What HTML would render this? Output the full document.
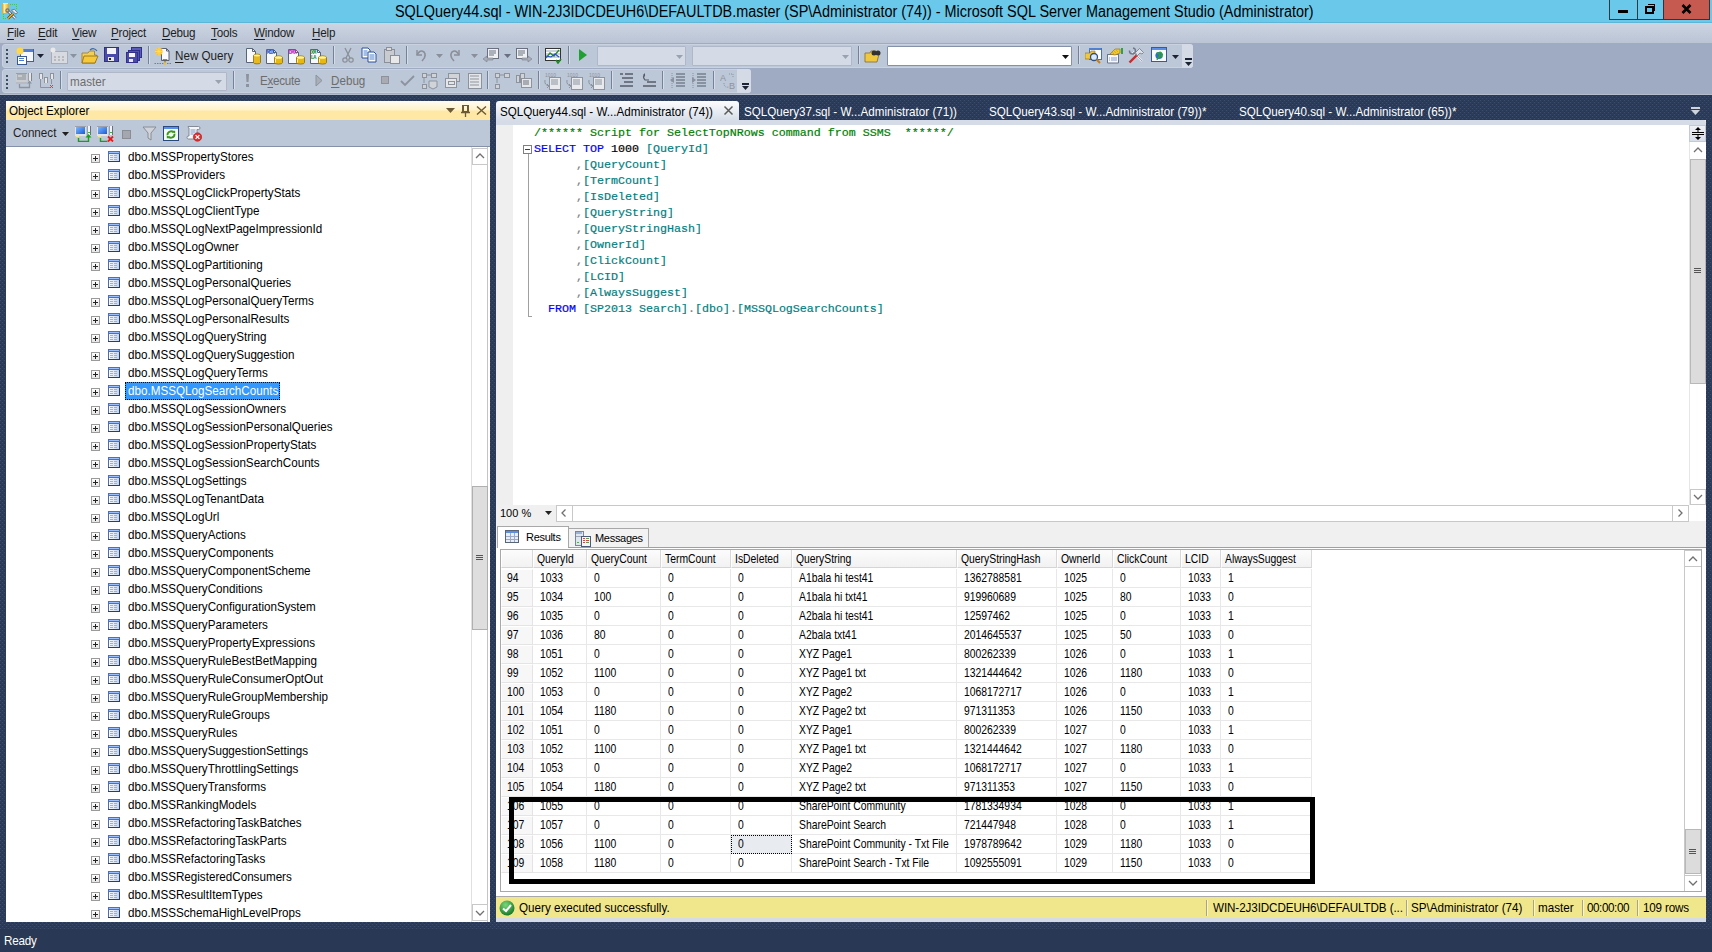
<!DOCTYPE html><html><head><meta charset="utf-8"><style>
*{margin:0;padding:0;box-sizing:border-box}
html,body{width:1712px;height:952px;overflow:hidden}
body{position:relative;background:#293955;font-family:"Liberation Sans", sans-serif;font-size:11.5px;color:#000}
.ab{position:absolute}
.tr,.su{font-size:12.6px;transform:scaleX(0.925);transform-origin:0 0}
svg rect{shape-rendering:crispEdges}
.t{position:absolute;white-space:nowrap;line-height:1}
.env{background-color:#2b3b58;background-image:conic-gradient(from 270deg at 1px 1px,#3a4d6e 90deg,transparent 0),conic-gradient(from 270deg at 1px 1px,#3a4d6e 90deg,transparent 0),conic-gradient(from 270deg at 1px 1px,#26344f 90deg,transparent 0),conic-gradient(from 270deg at 1px 1px,#26344f 90deg,transparent 0);background-size:4px 4px;background-position:0 0,2px 2px,0 3px,2px 1px}
</style></head><body>
<div class="ab env" style="left:0;top:92px;width:1712px;height:860px"></div>
<div class="ab" style="left:0;top:0;width:1712px;height:23px;background:#6ac9ea;border-bottom:1px solid #5db6d8"></div>
<svg class="ab" style="left:0;top:0" width="20" height="21" viewBox="0 0 20 21">
<defs><linearGradient id="gold" x1="0" x2="1"><stop offset="0" stop-color="#d89a20"/><stop offset="0.35" stop-color="#fff0a0"/><stop offset="1" stop-color="#e8a010"/></linearGradient></defs>
<rect x="2" y="3" width="7" height="10" rx="1.5" fill="url(#gold)"/><rect x="3" y="3" width="5" height="1" fill="#f8e8a8"/>
<g fill="#44cc33"><rect x="10" y="4" width="1" height="1"/><rect x="12" y="4" width="1" height="1"/><rect x="14" y="4" width="1" height="1"/><rect x="16" y="4" width="1" height="1"/><rect x="16" y="6" width="1" height="1"/><rect x="16" y="8" width="1" height="1"/><rect x="3" y="14" width="1" height="1"/><rect x="3" y="16" width="1" height="1"/><rect x="3" y="18" width="1" height="1"/><rect x="5" y="18" width="1" height="1"/></g>
<path d="M8 11L15.5 18.5" stroke="#4a5470" stroke-width="2.6"/><path d="M8 11L15.5 18.5" stroke="#f4f6ff" stroke-width="1.2"/><circle cx="7.5" cy="10.5" r="1.6" fill="none" stroke="#6a7490" stroke-width="1.2"/>
<path d="M8 18.5L13 13.5" stroke="#5a4010" stroke-width="2.6"/><path d="M8 18.5L13 13.5" stroke="#f0b020" stroke-width="1.4"/>
<path d="M11.5 10L14.5 9.3L17.5 12.8L16 14L13.2 12z" fill="#e8eaf0" stroke="#606a80" stroke-width="0.8"/>
</svg>
<div class="t" style="left:395px;top:4px;font-size:16px;transform:scaleX(0.9015);transform-origin:0 0;color:#000">SQLQuery44.sql - WIN-2J3IDCDEUH6\DEFAULTDB.master (SP\Administrator (74)) - Microsoft SQL Server Management Studio (Administrator)</div>
<div class="ab" style="left:1609px;top:0;width:29px;height:20px;border:1px solid #2d3b40;border-top:0"></div>
<div class="ab" style="left:1637px;top:0;width:27px;height:20px;border:1px solid #2d3b40;border-top:0;border-left:0"></div>
<div class="ab" style="left:1663px;top:0;width:47px;height:20px;background:#c75a50;border:1px solid #3a3030;border-top:0"></div>
<div class="ab" style="left:1618px;top:10px;width:10px;height:3px;background:#000"></div>
<div class="ab" style="left:1645px;top:6px;width:9px;height:8px;border:2px solid #000;border-top-width:2px"></div>
<div class="ab" style="left:1648px;top:4px;width:7px;height:7px;border-top:1px solid #000;border-right:1px solid #000"></div>
<svg class="ab" style="left:1681px;top:4px" width="11" height="10" viewBox="0 0 11 10"><path d="M1.5 1L9.5 9M9.5 1L1.5 9" stroke="#000" stroke-width="2.6"/></svg>
<div class="ab" style="left:0;top:23px;width:1712px;height:20px;background:linear-gradient(#cdd5e2,#bac4d5)"></div>
<div class="t su" style="left:7px;top:27px;letter-spacing:-0.2px;color:#1e1e1e"><u style="text-decoration-thickness:1px;text-underline-offset:2px">F</u>ile</div>
<div class="t su" style="left:38px;top:27px;letter-spacing:-0.2px;color:#1e1e1e"><u style="text-decoration-thickness:1px;text-underline-offset:2px">E</u>dit</div>
<div class="t su" style="left:72px;top:27px;letter-spacing:-0.2px;color:#1e1e1e"><u style="text-decoration-thickness:1px;text-underline-offset:2px">V</u>iew</div>
<div class="t su" style="left:111px;top:27px;letter-spacing:-0.2px;color:#1e1e1e"><u style="text-decoration-thickness:1px;text-underline-offset:2px">P</u>roject</div>
<div class="t su" style="left:162px;top:27px;letter-spacing:-0.2px;color:#1e1e1e"><u style="text-decoration-thickness:1px;text-underline-offset:2px">D</u>ebug</div>
<div class="t su" style="left:211px;top:27px;letter-spacing:-0.2px;color:#1e1e1e"><u style="text-decoration-thickness:1px;text-underline-offset:2px">T</u>ools</div>
<div class="t su" style="left:254px;top:27px;letter-spacing:-0.2px;color:#1e1e1e"><u style="text-decoration-thickness:1px;text-underline-offset:2px">W</u>indow</div>
<div class="t su" style="left:312px;top:27px;letter-spacing:-0.2px;color:#1e1e1e"><u style="text-decoration-thickness:1px;text-underline-offset:2px">H</u>elp</div>
<div class="ab" style="left:0;top:43px;width:1712px;height:52px;background:#9eabc2;border-bottom:1px solid #b3bdce"></div>
<div class="ab" style="left:2px;top:44px;width:1191px;height:24px;background:#bcc7d8;border-radius:3px;border:1px solid #c9d2e0"></div>
<div class="ab" style="left:1182px;top:44px;width:11px;height:24px;background:#d5dbe6;border-radius:0 3px 3px 0"></div>
<div class="ab" style="left:2px;top:69px;width:749px;height:24px;background:#bcc7d8;border-radius:3px;border:1px solid #c9d2e0"></div>
<div class="ab" style="left:737px;top:69px;width:14px;height:24px;background:#d5dbe6;border-radius:0 3px 3px 0"></div>
<div class="ab" style="left:6px;top:49px;width:2px;height:2px;background:#3d4b63"></div>
<div class="ab" style="left:6px;top:53px;width:2px;height:2px;background:#3d4b63"></div>
<div class="ab" style="left:6px;top:57px;width:2px;height:2px;background:#3d4b63"></div>
<div class="ab" style="left:6px;top:61px;width:2px;height:2px;background:#3d4b63"></div>
<div class="ab" style="left:6px;top:75px;width:2px;height:2px;background:#3d4b63"></div>
<div class="ab" style="left:6px;top:79px;width:2px;height:2px;background:#3d4b63"></div>
<div class="ab" style="left:6px;top:83px;width:2px;height:2px;background:#3d4b63"></div>
<div class="ab" style="left:6px;top:87px;width:2px;height:2px;background:#3d4b63"></div>
<svg class="ab" style="left:16px;top:47px" width="18" height="18" viewBox="0 0 18 18"><rect x="4" y="2" width="13" height="12" fill="#f4f7fc" stroke="#3e5f9a"/><rect x="4" y="2" width="13" height="3" fill="#4f7fd0"/><circle cx="4" cy="4" r="3.5" fill="#ffd84a"/><rect x="1" y="9" width="9" height="8" fill="#fff" stroke="#3a5a90"/><path d="M3 11.5h5M3 13.5h5" stroke="#4a7ad0"/></svg>
<svg class="ab" style="left:37px;top:54px" width="7" height="4" viewBox="0 0 7 4"><path d="M0 0H7L3.5 4z" fill="#1b2233"/></svg>
<svg class="ab" style="left:49px;top:47px" width="20" height="18" viewBox="0 0 20 18"><rect x="2" y="4" width="16" height="12" fill="#d7dbe1" stroke="#a8adb5"/><path d="M5 10h2M9 10h2M13 10h2M5 13h2M9 13h2M13 13h2" stroke="#999"/><circle cx="4" cy="3" r="2.5" fill="#e8e8e8"/></svg>
<svg class="ab" style="left:70px;top:54px" width="7" height="4" viewBox="0 0 7 4"><path d="M0 0H7L3.5 4z" fill="#8a92a0"/></svg>
<svg class="ab" style="left:81px;top:47px" width="18" height="18" viewBox="0 0 18 18"><path d="M1 6h6l1.5 -2h5v4h2L14 16H1z" fill="#f2cf58" stroke="#a07820" stroke-width="0.8"/><path d="M3 9h14l-3 7H1z" fill="#f6c93a" stroke="#8a6a18" stroke-width="0.8"/><path d="M9 3 q4 -3 7 1" stroke="#3a6aa8" fill="none" stroke-width="1.2"/></svg>
<svg class="ab" style="left:104px;top:47px" width="15" height="16" viewBox="0 0 15 16"><rect x="0.5" y="0.5" width="14" height="14" fill="#4a4aa8" stroke="#30308a"/><rect x="3" y="1" width="9" height="6" fill="#f4f4f8"/><rect x="4" y="10" width="6" height="4" fill="#e8e8f0"/><rect x="5" y="11" width="2" height="2" fill="#222"/></svg>
<svg class="ab" style="left:126px;top:47px" width="16" height="16" viewBox="0 0 16 16"><rect x="5" y="0.5" width="10.5" height="10" fill="#5a5ab8" stroke="#30308a"/><rect x="2.5" y="3" width="10.5" height="10" fill="#5252b0" stroke="#30308a"/><rect x="0.5" y="5" width="10.5" height="10.5" fill="#4a4aa8" stroke="#30308a"/><rect x="2.5" y="6" width="6" height="4" fill="#f4f4f8"/><rect x="3" y="12" width="4" height="3" fill="#e8e8f0"/></svg>
<div class="ab" style="left:148px;top:46px;width:1px;height:18px;background:#74819a;box-shadow:1px 0 #d6dde8"></div>
<svg class="ab" style="left:154px;top:47px" width="19" height="18" viewBox="0 0 19 18"><path d="M7.5 1.5h5l2.5 2.5v9.5h-7.5z" fill="#fbfbfd" stroke="#5a6070"/><path d="M12.5 1.5v2.5h2.5" fill="none" stroke="#5a6070"/><path d="M9 13.5v-1h4v1" fill="none" stroke="#6a7080" stroke-width="0.8"/><circle cx="5" cy="4.5" r="3.6" fill="#ffc020"/><path d="M5 0.5v8M1 4.5h8M2.2 1.7l5.6 5.6M7.8 1.7l-5.6 5.6" stroke="#ffe070" stroke-width="0.8"/><path d="M0.5 16.5h17" stroke="#b07810" stroke-width="1" stroke-dasharray="1.5,1"/><path d="M11 13.5v3" stroke="#806010"/><circle cx="11" cy="16.5" r="1.3" fill="#f0c030"/></svg>
<div class="t su" style="left:175px;top:50px;color:#1e1e1e"><u style="text-decoration-thickness:1px;text-underline-offset:2px">N</u>ew Query</div>
<svg class="ab" style="left:245px;top:47px" width="18" height="18" viewBox="0 0 18 18"><path d="M1.5 1.5h6l3 3v11h-9z" fill="#f8f9fc" stroke="#5a6478"/><path d="M7.5 1.5v3h3" fill="none" stroke="#5a6478"/><path d="M8.5 8.5a3.5 1.4 0 0 1 7 0v7a3.5 1.4 0 0 1 -7 0z" fill="#e8b820" stroke="#8a6a08" stroke-width="0.8"/><ellipse cx="12" cy="8.5" rx="3.1" ry="1.1" fill="#fff2a0"/></svg>
<svg class="ab" style="left:265px;top:47px" width="19" height="18" viewBox="0 0 19 18"><path d="M1.5 2.5h7l3 3v11h-10z" fill="#f8f9fc" stroke="#5a6478"/><path d="M8.5 2.5v3h3" fill="none" stroke="#5a6478"/><text x="1.8" y="7" font-size="5.2" font-family="Liberation Mono" font-weight="bold" fill="#1a50c8" letter-spacing="-0.6">MDX</text><path d="M9.5 10.5a4 1.6 0 0 1 8 0v5a4 1.6 0 0 1 -8 0z" fill="#e6b810" stroke="#8a6a08" stroke-width="0.8"/><ellipse cx="13.5" cy="10.5" rx="3.6" ry="1.3" fill="#fff2a0"/><path d="M10.5 12v3.5" stroke="#fff0a0" stroke-width="1"/></svg>
<svg class="ab" style="left:287px;top:47px" width="19" height="18" viewBox="0 0 19 18"><path d="M1.5 2.5h7l3 3v11h-10z" fill="#f8f9fc" stroke="#5a6478"/><path d="M8.5 2.5v3h3" fill="none" stroke="#5a6478"/><text x="1.8" y="7" font-size="5.2" font-family="Liberation Mono" font-weight="bold" fill="#c020c0" letter-spacing="-0.6">DMX</text><path d="M9.5 10.5a4 1.6 0 0 1 8 0v5a4 1.6 0 0 1 -8 0z" fill="#e6b810" stroke="#8a6a08" stroke-width="0.8"/><ellipse cx="13.5" cy="10.5" rx="3.6" ry="1.3" fill="#fff2a0"/><path d="M10.5 12v3.5" stroke="#fff0a0" stroke-width="1"/></svg>
<svg class="ab" style="left:309px;top:47px" width="19" height="18" viewBox="0 0 19 18"><path d="M1.5 2.5h7l3 3v11h-10z" fill="#f8f9fc" stroke="#5a6478"/><path d="M8.5 2.5v3h3" fill="none" stroke="#5a6478"/><text x="1.8" y="7" font-size="5.2" font-family="Liberation Mono" font-weight="bold" fill="#109040" letter-spacing="-0.6">XM</text><text x="1.8" y="11.5" font-size="5.2" font-family="Liberation Mono" font-weight="bold" fill="#109040" letter-spacing="-0.6">LA</text><path d="M9.5 10.5a4 1.6 0 0 1 8 0v5a4 1.6 0 0 1 -8 0z" fill="#e6b810" stroke="#8a6a08" stroke-width="0.8"/><ellipse cx="13.5" cy="10.5" rx="3.6" ry="1.3" fill="#fff2a0"/><path d="M10.5 12v3.5" stroke="#fff0a0" stroke-width="1"/></svg>
<div class="ab" style="left:333px;top:46px;width:1px;height:18px;background:#74819a;box-shadow:1px 0 #d6dde8"></div>
<svg class="ab" style="left:342px;top:47px" width="12" height="16" viewBox="0 0 12 16"><path d="M3 1L8 11M9 1L4 11" stroke="#8a8f98" stroke-width="1.3"/><circle cx="3" cy="13" r="2.2" fill="none" stroke="#8a8f98" stroke-width="1.2"/><circle cx="9" cy="13" r="2.2" fill="none" stroke="#8a8f98" stroke-width="1.2"/></svg>
<svg class="ab" style="left:361px;top:47px" width="17" height="16" viewBox="0 0 17 16"><path d="M1 1h6l2 2v8H1z" fill="#fff" stroke="#2a50a0"/><path d="M2.5 4h4M2.5 6h4M2.5 8h4" stroke="#4a80d0"/><path d="M7 5h6l2 2v8H7z" fill="#fff" stroke="#2a50a0"/><path d="M8.5 8h5M8.5 10h5M8.5 12h5" stroke="#4a80d0"/></svg>
<svg class="ab" style="left:383px;top:47px" width="17" height="17" viewBox="0 0 17 17"><rect x="1" y="2" width="10" height="13" fill="#c8cbd0" stroke="#8a8f98"/><rect x="3.5" y="0.5" width="5" height="3" fill="#dcdcdc" stroke="#8a8f98"/><rect x="7" y="8" width="9" height="8" fill="#e8e8e8" stroke="#8a8f98"/></svg>
<div class="ab" style="left:406px;top:46px;width:1px;height:18px;background:#74819a;box-shadow:1px 0 #d6dde8"></div>
<svg class="ab" style="left:414px;top:47px" width="13" height="15" viewBox="0 0 13 15"><path d="M3 3 L3 8 L8 8" stroke="#8a8f98" stroke-width="1.4" fill="none"/><path d="M3 8 Q6 2 10 5 Q13 9 8 14" stroke="#8a8f98" stroke-width="1.6" fill="none"/></svg>
<svg class="ab" style="left:436px;top:54px" width="7" height="4" viewBox="0 0 7 4"><path d="M0 0H7L3.5 4z" fill="#8a8f98"/></svg>
<svg class="ab" style="left:449px;top:47px" width="13" height="15" viewBox="0 0 13 15"><path d="M10 3 L10 8 L5 8" stroke="#8a8f98" stroke-width="1.4" fill="none"/><path d="M10 8 Q7 2 3 5 Q0 9 5 14" stroke="#8a8f98" stroke-width="1.6" fill="none"/></svg>
<svg class="ab" style="left:471px;top:54px" width="7" height="4" viewBox="0 0 7 4"><path d="M0 0H7L3.5 4z" fill="#8a8f98"/></svg>
<svg class="ab" style="left:482px;top:47px" width="18" height="16" viewBox="0 0 18 16"><rect x="5" y="1" width="11" height="10" fill="#eef0f4" stroke="#6a7080"/><path d="M7 4h7M7 6h7M7 8h5" stroke="#6a7080"/><path d="M1 12l4 -3v2h6v2H5v2z" fill="#a8aeb8" stroke="#7a808a" stroke-width="0.6"/></svg>
<svg class="ab" style="left:504px;top:54px" width="7" height="4" viewBox="0 0 7 4"><path d="M0 0H7L3.5 4z" fill="#6a7080"/></svg>
<svg class="ab" style="left:515px;top:47px" width="18" height="16" viewBox="0 0 18 16"><rect x="1" y="1" width="11" height="10" fill="#eef0f4" stroke="#6a7080"/><path d="M3 4h7M3 6h7M3 8h5" stroke="#6a7080"/><path d="M17 12l-4 -3v2H7v2h6v2z" fill="#a8aeb8" stroke="#7a808a" stroke-width="0.6"/></svg>
<div class="ab" style="left:538px;top:46px;width:1px;height:18px;background:#74819a;box-shadow:1px 0 #d6dde8"></div>
<svg class="ab" style="left:545px;top:47px" width="17" height="17" viewBox="0 0 17 17"><rect x="0.5" y="1.5" width="15" height="12" fill="#fff" stroke="#333"/><path d="M1 4h14M1 7h14M1 10h14" stroke="#9ab"/><path d="M1 11 L5 6 L9 9 L14 3" stroke="#2a8a2a" stroke-width="1.3" fill="none"/><path d="M1 9 L6 10 L10 7 L14 10" stroke="#2a4ac0" stroke-width="1.1" fill="none"/><path d="M11 13l2 3 3 -4" stroke="#1a8a1a" stroke-width="1.6" fill="none"/></svg>
<div class="ab" style="left:568px;top:46px;width:1px;height:18px;background:#74819a;box-shadow:1px 0 #d6dde8"></div>
<svg class="ab" style="left:578px;top:48px" width="10" height="14" viewBox="0 0 10 14"><path d="M1 1L9 7L1 13z" fill="#20a030"/></svg>
<div class="ab" style="left:597px;top:46px;width:89px;height:20px;background:#d5dbe6;border:1px solid #aeb8c8;border-radius:1px"></div>
<svg class="ab" style="left:676px;top:55px" width="7" height="4" viewBox="0 0 7 4"><path d="M0 0H7L3.5 4z" fill="#9aa2b0"/></svg>
<div class="ab" style="left:692px;top:46px;width:160px;height:20px;background:#d5dbe6;border:1px solid #aeb8c8;border-radius:1px"></div>
<svg class="ab" style="left:842px;top:55px" width="7" height="4" viewBox="0 0 7 4"><path d="M0 0H7L3.5 4z" fill="#9aa2b0"/></svg>
<div class="ab" style="left:858px;top:46px;width:1px;height:18px;background:#74819a;box-shadow:1px 0 #d6dde8"></div>
<svg class="ab" style="left:864px;top:48px" width="17" height="15" viewBox="0 0 17 15"><path d="M1 5h5l1 -2h5v3h3L13 14H1z" fill="#f0c840" stroke="#806010" stroke-width="0.7"/><circle cx="10" cy="5" r="2.5" fill="#333"/><circle cx="14" cy="5" r="2.5" fill="#333"/></svg>
<div class="ab" style="left:887px;top:46px;width:185px;height:20px;background:#fff;border:1px solid #8591a8;border-radius:1px"></div>
<svg class="ab" style="left:1062px;top:55px" width="7" height="4" viewBox="0 0 7 4"><path d="M0 0H7L3.5 4z" fill="#111"/></svg>
<div class="ab" style="left:1078px;top:46px;width:1px;height:18px;background:#74819a;box-shadow:1px 0 #d6dde8"></div>
<svg class="ab" style="left:1085px;top:47px" width="17" height="17" viewBox="0 0 17 17"><rect x="4" y="1" width="12" height="11" fill="#fff" stroke="#4a70b0"/><rect x="4" y="1" width="12" height="2" fill="#5080d0"/><path d="M0 6h5l1 -2h4v8H0z" fill="#f0c840" stroke="#906818" stroke-width="0.6"/><circle cx="9" cy="10" r="3.5" fill="#d8ecff" stroke="#305080" stroke-width="1.3"/><path d="M11.5 12.5L15 16" stroke="#c08020" stroke-width="2"/></svg>
<svg class="ab" style="left:1106px;top:47px" width="18" height="17" viewBox="0 0 18 17"><rect x="1" y="7" width="12" height="9" fill="#f6f8fc"/><rect x="1" y="7" width="12" height="1" fill="#6a90d8"/><path d="M1.5 7.5h11v8.5h-11z" fill="none" stroke="#6a7488"/><path d="M3 11h1M5 11h6M3 13h1M5 13h6" stroke="#8aa0c8"/><path d="M4 7 L9 2 L14 2 L14 6 L9 8 z" fill="#f0c830" stroke="#a07810" stroke-width="0.7"/><path d="M6 5l2 2M8 4l2 2M10 3l2 2" stroke="#c89818" stroke-width="0.6"/><rect x="15" y="1" width="2" height="6" fill="#30a040"/></svg>
<svg class="ab" style="left:1128px;top:47px" width="17" height="17" viewBox="0 0 17 17"><path d="M4.5 4.5L14 14" stroke="#e8ecf0" stroke-width="2.2"/><path d="M4.5 4.5L14 14" stroke="#707888" stroke-width="0.6"/><path d="M1.5 3.5a3 3 0 1 0 3.5 -2.5" fill="none" stroke="#707888" stroke-width="1.4"/><path d="M1.5 15.5L9 8" stroke="#d02828" stroke-width="2.4"/><path d="M7.5 5.5l4 -4 4 4 -1.5 1.5 -2 -1 -3 3z" fill="#e0e4ea" stroke="#707888" stroke-width="0.8"/></svg>
<svg class="ab" style="left:1151px;top:47px" width="17" height="17" viewBox="0 0 17 17"><rect x="0" y="0" width="16" height="15" fill="#3a5a90"/><rect x="1" y="1" width="14" height="2" fill="#5a90e8"/><rect x="1" y="3" width="14" height="11" fill="#f8faff"/><circle cx="8" cy="8.5" r="3.6" fill="#2a70d0"/><path d="M5.5 6.5q2 -1 3 1q1 2 -1 3q-1 1 -1.5 2.2M8.5 5q2 0.5 2.8 2.5q-1 1 -0.5 3" fill="none" stroke="#30a030" stroke-width="1.6"/></svg>
<svg class="ab" style="left:1172px;top:55px" width="7" height="4" viewBox="0 0 7 4"><path d="M0 0H7L3.5 4z" fill="#1b2233"/></svg>
<div class="ab" style="left:1185px;top:58px;width:7px;height:2px;background:#1b2233"></div>
<svg class="ab" style="left:1185px;top:62px" width="7" height="4" viewBox="0 0 7 4"><path d="M0 0H7L3.5 4z" fill="#1b2233"/></svg>
<svg class="ab" style="left:16px;top:72px" width="17" height="17" viewBox="0 0 17 17"><rect x="0" y="1" width="11" height="9" fill="#c9ccd1"/><rect x="0" y="1" width="11" height="1" fill="#9a9ea6"/><rect x="1" y="2" width="9" height="6" fill="#a9adb4"/><rect x="2" y="3" width="4" height="2" fill="#c8cbd0"/><rect x="0" y="10" width="11" height="2" fill="#b8bcc2"/><rect x="12" y="1" width="4" height="8" fill="#e4e6e9"/><rect x="12" y="1" width="1" height="8" fill="#9a9ea6"/><rect x="15" y="1" width="1" height="8" fill="#80858d"/><path d="M3.5 12v3.5h10V11" fill="none" stroke="#8d939d" stroke-width="1.3"/><path d="M11 11.5L13.5 8.5l2.5 3z" fill="#8d939d"/></svg>
<svg class="ab" style="left:38px;top:72px" width="17" height="17" viewBox="0 0 17 17"><rect x="1" y="1" width="4" height="6" fill="#e4e6e9"/><rect x="1" y="1" width="4" height="1" fill="#8d939d"/><rect x="1" y="1" width="1" height="6" fill="#8d939d"/><rect x="4" y="1" width="1" height="6" fill="#8d939d"/><rect x="6" y="5" width="4" height="6" fill="#e4e6e9"/><rect x="6" y="5" width="1" height="6" fill="#8d939d"/><rect x="9" y="5" width="1" height="6" fill="#8d939d"/><rect x="6" y="5" width="4" height="1" fill="#8d939d"/><rect x="12" y="1" width="4" height="6" fill="#e4e6e9"/><rect x="12" y="1" width="4" height="1" fill="#8d939d"/><rect x="12" y="1" width="1" height="6" fill="#8d939d"/><rect x="15" y="1" width="1" height="6" fill="#8d939d"/><path d="M2.5 7v8.5h10M13.5 7v5" stroke="#8d939d" fill="none"/><path d="M12 13l3 3M15 13l-3 3" stroke="#d04040"/></svg>
<div class="ab" style="left:60px;top:71px;width:1px;height:18px;background:#74819a;box-shadow:1px 0 #d6dde8"></div>
<div class="ab" style="left:67px;top:72px;width:160px;height:19px;background:#d5dbe6;border:1px solid #aeb8c8;border-radius:1px"></div>
<div class="t su" style="left:70px;top:76px;color:#6d6d6d">master</div>
<svg class="ab" style="left:215px;top:80px" width="7" height="4" viewBox="0 0 7 4"><path d="M0 0H7L3.5 4z" fill="#9aa2b0"/></svg>
<div class="ab" style="left:233px;top:71px;width:1px;height:18px;background:#74819a;box-shadow:1px 0 #d6dde8"></div>
<svg class="ab" style="left:244px;top:73px" width="7" height="15" viewBox="0 0 7 15"><path d="M2 1h3l-0.5 8h-2z" fill="#8d939d"/><rect x="2" y="11" width="3" height="3" fill="#8d939d"/></svg>
<div class="t su" style="left:260px;top:75px;color:#6d6d6d;letter-spacing:-0.3px">E<u style="text-decoration-thickness:1px;text-underline-offset:2px">x</u>ecute</div>
<svg class="ab" style="left:315px;top:74px" width="8" height="13" viewBox="0 0 8 13"><path d="M1 1L7 6.5L1 12z" fill="#a9afb8" stroke="#8d939d"/></svg>
<div class="t su" style="left:331px;top:75px;color:#6d6d6d"><u style="text-decoration-thickness:1px;text-underline-offset:2px">D</u>ebug</div>
<svg class="ab" style="left:381px;top:76px" width="8" height="8" viewBox="0 0 8 8"><rect x="0" y="0" width="8" height="8" fill="#8e939a"/><rect x="1" y="1" width="6" height="6" fill="#a8acb2"/></svg>
<svg class="ab" style="left:400px;top:75px" width="15" height="12" viewBox="0 0 15 12"><path d="M1 6L5 10L14 1" stroke="#8d939d" stroke-width="1.8" fill="none"/></svg>
<svg class="ab" style="left:421px;top:72px" width="17" height="18" viewBox="0 0 17 18"><rect x="1" y="1" width="4" height="4" fill="#d0d3d8" stroke="#8d939d"/><rect x="10" y="1" width="5" height="4" fill="#d0d3d8" stroke="#8d939d"/><path d="M5 3h5" stroke="#8d939d"/><path d="M3 6v5" stroke="#8d939d"/><rect x="1" y="12" width="4" height="4" fill="#d0d3d8" stroke="#8d939d"/><path d="M8 9h8v6l-4 2 -4 -2z" fill="#d0d3d8" stroke="#8d939d"/></svg>
<svg class="ab" style="left:444px;top:72px" width="17" height="18" viewBox="0 0 17 18"><rect x="4" y="1" width="11" height="8" fill="#d0d3d8" stroke="#8d939d"/><rect x="1" y="6" width="11" height="9" fill="#e4e6ea" stroke="#8d939d"/><rect x="4" y="9" width="6" height="3" fill="none" stroke="#8d939d"/></svg>
<svg class="ab" style="left:467px;top:72px" width="15" height="18" viewBox="0 0 15 18"><rect x="1" y="1" width="13" height="15" fill="#e4e6ea" stroke="#8d939d"/><path d="M3 4h9M3 7h9M3 10h9M3 13h9" stroke="#8d939d"/></svg>
<div class="ab" style="left:487px;top:71px;width:1px;height:18px;background:#74819a;box-shadow:1px 0 #d6dde8"></div>
<svg class="ab" style="left:494px;top:72px" width="17" height="18" viewBox="0 0 17 18"><rect x="1" y="1" width="4" height="4" fill="#d0d3d8" stroke="#8d939d"/><rect x="10" y="1" width="5" height="4" fill="#d0d3d8" stroke="#8d939d"/><path d="M5 3h5M3 6v5" stroke="#8d939d"/><rect x="1" y="12" width="4" height="4" fill="#d0d3d8" stroke="#8d939d"/></svg>
<svg class="ab" style="left:515px;top:72px" width="17" height="18" viewBox="0 0 17 18"><rect x="1" y="3" width="3" height="7" fill="#d0d3d8" stroke="#8d939d"/><rect x="5" y="1" width="4" height="9" fill="#d0d3d8" stroke="#8d939d"/><rect x="6" y="6" width="10" height="9" fill="#e4e6ea" stroke="#8d939d"/><rect x="8" y="8" width="6" height="5" fill="#a8acb2"/></svg>
<div class="ab" style="left:538px;top:71px;width:1px;height:18px;background:#74819a;box-shadow:1px 0 #d6dde8"></div>
<svg class="ab" style="left:544px;top:72px" width="17" height="18" viewBox="0 0 17 18"><text x="1" y="5" font-size="5" font-family="Liberation Sans" fill="#8d939d">1010</text><rect x="5" y="5" width="11" height="12" fill="#e8eaee" stroke="#8d939d"/><path d="M7 8h7M7 10h7M7 12h7" stroke="#8d939d"/><path d="M1 8q-1 5 4 6" stroke="#8d939d" fill="none"/><path d="M3 12l2 2 -2 2" stroke="#8d939d" fill="none"/></svg>
<svg class="ab" style="left:566px;top:72px" width="17" height="18" viewBox="0 0 17 18"><text x="1" y="5" font-size="5" font-family="Liberation Sans" fill="#8d939d">1010</text><rect x="5" y="5" width="11" height="12" fill="#e8eaee" stroke="#8d939d"/><path d="M7 8h7M7 10h7M7 12h7" stroke="#8d939d"/><path d="M1 8q-1 5 4 6" stroke="#8d939d" fill="none"/><path d="M3 12l2 2 -2 2" stroke="#8d939d" fill="none"/></svg>
<svg class="ab" style="left:588px;top:72px" width="17" height="18" viewBox="0 0 17 18"><text x="1" y="5" font-size="5" font-family="Liberation Sans" fill="#8d939d">1010</text><rect x="5" y="5" width="11" height="12" fill="#e8eaee" stroke="#8d939d"/><path d="M7 8h7M7 10h7M7 12h7" stroke="#8d939d"/><path d="M1 8q-1 5 4 6" stroke="#8d939d" fill="none"/><path d="M3 12l2 2 -2 2" stroke="#8d939d" fill="none"/></svg>
<div class="ab" style="left:611px;top:71px;width:1px;height:18px;background:#74819a;box-shadow:1px 0 #d6dde8"></div>
<svg class="ab" style="left:618px;top:72px" width="17" height="18" viewBox="0 0 17 18"><path d="M2 2h3M7 2h8M4 6h11M6 10h9M2 14h13" stroke="#555c68" stroke-width="1.3"/></svg>
<svg class="ab" style="left:641px;top:72px" width="17" height="18" viewBox="0 0 17 18"><path d="M4 3q-3 1 0 5h4" stroke="#555c68" stroke-width="1.2" fill="none"/><path d="M2 3l2 -2v4z" fill="#555c68"/><path d="M6 10h9M2 14h13" stroke="#555c68" stroke-width="1.3"/></svg>
<div class="ab" style="left:662px;top:71px;width:1px;height:18px;background:#74819a;box-shadow:1px 0 #d6dde8"></div>
<svg class="ab" style="left:669px;top:72px" width="17" height="18" viewBox="0 0 17 18"><path d="M7 2h9M7 5h9M7 8h9M7 11h9M7 14h9" stroke="#555c68" stroke-width="1.2"/><path d="M1 8l4 -3v6z" fill="#8a92a0"/><path d="M3 1v16" stroke="#8a92a0" stroke-dasharray="1,1"/></svg>
<svg class="ab" style="left:690px;top:72px" width="17" height="18" viewBox="0 0 17 18"><path d="M7 2h9M7 5h9M7 8h9M7 11h9M7 14h9" stroke="#555c68" stroke-width="1.2"/><path d="M6 8l-4 -3v6z" fill="#8a92a0"/><path d="M3 1v16" stroke="#8a92a0" stroke-dasharray="1,1"/></svg>
<div class="ab" style="left:713px;top:71px;width:1px;height:18px;background:#74819a;box-shadow:1px 0 #d6dde8"></div>
<svg class="ab" style="left:720px;top:72px" width="17" height="18" viewBox="0 0 17 18"><text x="0" y="9" font-size="9" font-family="Liberation Sans" fill="#8d939d">A</text><text x="9" y="17" font-size="9" font-family="Liberation Sans" fill="#8d939d">B</text><path d="M4 11q0 5 5 4M9 2l4 0v4" stroke="#8d939d" fill="none" stroke-dasharray="1,1"/></svg>
<div class="ab" style="left:742px;top:83px;width:7px;height:2px;background:#1b2233"></div>
<svg class="ab" style="left:742px;top:86px" width="7" height="4" viewBox="0 0 7 4"><path d="M0 0H7L3.5 4z" fill="#1b2233"/></svg>
<div class="ab" style="left:6px;top:101px;width:484px;height:821px;background:#fff"></div>
<div class="ab" style="left:6px;top:101px;width:484px;height:19px;background:linear-gradient(#fffcf2 0%,#fff3cc 45%,#ffe8a6 55%,#ffe8a6 100%);border-radius:2px 2px 0 0"></div>
<div class="t su" style="left:9px;top:105px;color:#000">Object Explorer</div>
<div class="ab" style="left:6px;top:120px;width:484px;height:27px;background:#bcc7d8;border-bottom:1px solid #8591a8"></div>
<div class="t su" style="left:13px;top:127px;color:#1e1e1e">Connect</div>
<svg class="ab" style="left:446px;top:108px" width="9" height="5" viewBox="0 0 9 5"><path d="M0 0H9L4.5 5z" fill="#6b5a35"/></svg>
<svg class="ab" style="left:461px;top:105px" width="9" height="12" viewBox="0 0 9 12"><rect x="2" y="0.5" width="5" height="6" fill="none" stroke="#6b5a35" stroke-width="1.2"/><path d="M0 7.5h9M4.5 7.5v4.5" stroke="#6b5a35" stroke-width="1.3"/></svg>
<svg class="ab" style="left:476px;top:106px" width="11" height="9" viewBox="0 0 11 9"><path d="M1 0.5L10 8.5M10 0.5L1 8.5" stroke="#6b5a35" stroke-width="1.4"/></svg>
<svg class="ab" style="left:62px;top:132px" width="7" height="4" viewBox="0 0 7 4"><path d="M0 0H7L3.5 4z" fill="#1e1e1e"/></svg>
<svg class="ab" style="left:75px;top:126px" width="17" height="16" viewBox="0 0 17 16"><defs><linearGradient id="scr" x1="0" y1="0" x2="1" y2="1"><stop offset="0" stop-color="#7ab8ff"/><stop offset="1" stop-color="#1a5ad8"/></linearGradient></defs><rect x="0" y="0" width="11" height="10" fill="#dfe3ea"/><rect x="0" y="0" width="11" height="1" fill="#9aa2b0"/><rect x="1" y="1" width="9" height="7" fill="url(#scr)"/><rect x="0" y="10" width="11" height="2" fill="#c4cad4"/><rect x="1" y="10" width="3" height="1" fill="#f0e890"/><rect x="12" y="0" width="4" height="9" fill="#f4f4f6"/><rect x="12" y="0" width="1" height="9" fill="#9aa0aa"/><rect x="15" y="0" width="1" height="9" fill="#6a7080"/><rect x="13" y="6" width="2" height="1" fill="#40b040"/><path d="M3.5 12v3.5h10V11" fill="none" stroke="#16a016" stroke-width="1.4"/><path d="M10.5 11.5L13.5 8l3 3.5z" fill="#16a016"/></svg>
<svg class="ab" style="left:97px;top:126px" width="17" height="16" viewBox="0 0 17 16"><defs><linearGradient id="scr2" x1="0" y1="0" x2="1" y2="1"><stop offset="0" stop-color="#7ab8ff"/><stop offset="1" stop-color="#1a5ad8"/></linearGradient></defs><rect x="0" y="0" width="11" height="10" fill="#dfe3ea"/><rect x="0" y="0" width="11" height="1" fill="#9aa2b0"/><rect x="1" y="1" width="9" height="7" fill="url(#scr2)"/><rect x="0" y="10" width="11" height="2" fill="#c4cad4"/><rect x="1" y="10" width="3" height="1" fill="#f0e890"/><rect x="12" y="0" width="4" height="9" fill="#f4f4f6"/><rect x="12" y="0" width="1" height="9" fill="#9aa0aa"/><rect x="15" y="0" width="1" height="9" fill="#6a7080"/><rect x="13" y="6" width="2" height="1" fill="#40b040"/><path d="M3.5 12v3.5h7" fill="none" stroke="#16a016" stroke-width="1.4"/><path d="M11 10.5l5 5M16 10.5l-5 5" stroke="#f01818" stroke-width="1.8"/></svg>
<svg class="ab" style="left:122px;top:130px" width="9" height="9" viewBox="0 0 9 9"><rect x="0.5" y="0.5" width="8" height="8" fill="#a4a8ae" stroke="#8a8e94"/></svg>
<svg class="ab" style="left:142px;top:126px" width="15" height="15" viewBox="0 0 15 15"><path d="M1 1h13L9 7v7l-3 -2V7z" fill="#d0d4da" stroke="#8a8e94"/></svg>
<svg class="ab" style="left:163px;top:126px" width="17" height="16" viewBox="0 0 17 16"><rect x="0" y="0" width="16" height="15" fill="#2a4880"/><rect x="1" y="1" width="14" height="2" fill="#5a90e8"/><rect x="1" y="3" width="14" height="11" fill="#f4f8ff"/><path d="M4.5 9a3.5 3.5 0 0 1 6.2 -2.4" stroke="#3a9a10" stroke-width="1.8" fill="none"/><path d="M9 4.8h3.2v3.2z" fill="#3a9a10"/><path d="M11.5 8a3.5 3.5 0 0 1 -6.2 2.4" stroke="#3a9a10" stroke-width="1.8" fill="none"/><path d="M7 12.2H3.8V9z" fill="#3a9a10"/></svg>
<svg class="ab" style="left:185px;top:125px" width="17" height="17" viewBox="0 0 17 17"><path d="M3 1.5h10.5a1.5 1.5 0 0 1 0 3H12v9.5H3.5a1.5 1.5 0 0 1 0 -3H4V3a1.5 1.5 0 0 1 -1 -1.5z" fill="#f4f6f8" stroke="#7a8290" stroke-width="0.9"/><path d="M5.5 5h5M5.5 7h5M5.5 9h3" stroke="#7a9ad0"/><circle cx="12.5" cy="12" r="4.2" fill="#e03030" stroke="#b01818" stroke-width="0.6"/><path d="M10.6 10.1l3.8 3.8M14.4 10.1l-3.8 3.8" stroke="#fff" stroke-width="1.3"/></svg>
<div class="ab" style="left:6px;top:147px;width:465px;height:775px;overflow:hidden">
<svg width="0" height="0" style="position:absolute"><defs><linearGradient id="tg" x1="0" x2="1"><stop offset="0" stop-color="#fbfdff"/><stop offset="1" stop-color="#c4d4f0"/></linearGradient><symbol id="tbl" viewBox="0 0 12 11"><rect x="0" y="0" width="12" height="11" fill="#4a6cb4"/><rect x="0" y="0" width="12" height="3" fill="#3f6fe0"/><rect x="1" y="1" width="10" height="1" fill="#9cc0ff"/><rect x="1" y="3" width="10" height="7" fill="url(#tg)"/><rect x="2" y="4" width="3" height="1" fill="#9fb0d4"/><rect x="6" y="4" width="3" height="1" fill="#9fb0d4"/><rect x="2" y="6" width="3" height="1" fill="#9fb0d4"/><rect x="6" y="6" width="3" height="1" fill="#9fb0d4"/><rect x="2" y="8" width="3" height="1" fill="#9fb0d4"/><rect x="6" y="8" width="3" height="1" fill="#9fb0d4"/><rect x="11" y="3" width="1" height="8" fill="#26406c"/><rect x="0" y="10" width="12" height="1" fill="#26406c"/></symbol></defs></svg>
<div class="ab" style="left:85px;top:7px;width:9px;height:9px;border:1px solid #9a9a9a;background:linear-gradient(#fdfdfd,#e6e6e6)"></div>
<div class="ab" style="left:87px;top:11px;width:5px;height:1px;background:#222"></div>
<div class="ab" style="left:89px;top:9px;width:1px;height:5px;background:#222"></div>
<svg class="ab" style="left:102px;top:4px" width="12" height="11"><use href="#tbl"/></svg>
<div class="t tr" style="left:121.5px;top:4px;color:#000">dbo.MSSPropertyStores</div>
<div class="ab" style="left:85px;top:25px;width:9px;height:9px;border:1px solid #9a9a9a;background:linear-gradient(#fdfdfd,#e6e6e6)"></div>
<div class="ab" style="left:87px;top:29px;width:5px;height:1px;background:#222"></div>
<div class="ab" style="left:89px;top:27px;width:1px;height:5px;background:#222"></div>
<svg class="ab" style="left:102px;top:22px" width="12" height="11"><use href="#tbl"/></svg>
<div class="t tr" style="left:121.5px;top:22px;color:#000">dbo.MSSProviders</div>
<div class="ab" style="left:85px;top:43px;width:9px;height:9px;border:1px solid #9a9a9a;background:linear-gradient(#fdfdfd,#e6e6e6)"></div>
<div class="ab" style="left:87px;top:47px;width:5px;height:1px;background:#222"></div>
<div class="ab" style="left:89px;top:45px;width:1px;height:5px;background:#222"></div>
<svg class="ab" style="left:102px;top:40px" width="12" height="11"><use href="#tbl"/></svg>
<div class="t tr" style="left:121.5px;top:40px;color:#000">dbo.MSSQLogClickPropertyStats</div>
<div class="ab" style="left:85px;top:61px;width:9px;height:9px;border:1px solid #9a9a9a;background:linear-gradient(#fdfdfd,#e6e6e6)"></div>
<div class="ab" style="left:87px;top:65px;width:5px;height:1px;background:#222"></div>
<div class="ab" style="left:89px;top:63px;width:1px;height:5px;background:#222"></div>
<svg class="ab" style="left:102px;top:58px" width="12" height="11"><use href="#tbl"/></svg>
<div class="t tr" style="left:121.5px;top:58px;color:#000">dbo.MSSQLogClientType</div>
<div class="ab" style="left:85px;top:79px;width:9px;height:9px;border:1px solid #9a9a9a;background:linear-gradient(#fdfdfd,#e6e6e6)"></div>
<div class="ab" style="left:87px;top:83px;width:5px;height:1px;background:#222"></div>
<div class="ab" style="left:89px;top:81px;width:1px;height:5px;background:#222"></div>
<svg class="ab" style="left:102px;top:76px" width="12" height="11"><use href="#tbl"/></svg>
<div class="t tr" style="left:121.5px;top:76px;color:#000">dbo.MSSQLogNextPageImpressionId</div>
<div class="ab" style="left:85px;top:97px;width:9px;height:9px;border:1px solid #9a9a9a;background:linear-gradient(#fdfdfd,#e6e6e6)"></div>
<div class="ab" style="left:87px;top:101px;width:5px;height:1px;background:#222"></div>
<div class="ab" style="left:89px;top:99px;width:1px;height:5px;background:#222"></div>
<svg class="ab" style="left:102px;top:94px" width="12" height="11"><use href="#tbl"/></svg>
<div class="t tr" style="left:121.5px;top:94px;color:#000">dbo.MSSQLogOwner</div>
<div class="ab" style="left:85px;top:115px;width:9px;height:9px;border:1px solid #9a9a9a;background:linear-gradient(#fdfdfd,#e6e6e6)"></div>
<div class="ab" style="left:87px;top:119px;width:5px;height:1px;background:#222"></div>
<div class="ab" style="left:89px;top:117px;width:1px;height:5px;background:#222"></div>
<svg class="ab" style="left:102px;top:112px" width="12" height="11"><use href="#tbl"/></svg>
<div class="t tr" style="left:121.5px;top:112px;color:#000">dbo.MSSQLogPartitioning</div>
<div class="ab" style="left:85px;top:133px;width:9px;height:9px;border:1px solid #9a9a9a;background:linear-gradient(#fdfdfd,#e6e6e6)"></div>
<div class="ab" style="left:87px;top:137px;width:5px;height:1px;background:#222"></div>
<div class="ab" style="left:89px;top:135px;width:1px;height:5px;background:#222"></div>
<svg class="ab" style="left:102px;top:130px" width="12" height="11"><use href="#tbl"/></svg>
<div class="t tr" style="left:121.5px;top:130px;color:#000">dbo.MSSQLogPersonalQueries</div>
<div class="ab" style="left:85px;top:151px;width:9px;height:9px;border:1px solid #9a9a9a;background:linear-gradient(#fdfdfd,#e6e6e6)"></div>
<div class="ab" style="left:87px;top:155px;width:5px;height:1px;background:#222"></div>
<div class="ab" style="left:89px;top:153px;width:1px;height:5px;background:#222"></div>
<svg class="ab" style="left:102px;top:148px" width="12" height="11"><use href="#tbl"/></svg>
<div class="t tr" style="left:121.5px;top:148px;color:#000">dbo.MSSQLogPersonalQueryTerms</div>
<div class="ab" style="left:85px;top:169px;width:9px;height:9px;border:1px solid #9a9a9a;background:linear-gradient(#fdfdfd,#e6e6e6)"></div>
<div class="ab" style="left:87px;top:173px;width:5px;height:1px;background:#222"></div>
<div class="ab" style="left:89px;top:171px;width:1px;height:5px;background:#222"></div>
<svg class="ab" style="left:102px;top:166px" width="12" height="11"><use href="#tbl"/></svg>
<div class="t tr" style="left:121.5px;top:166px;color:#000">dbo.MSSQLogPersonalResults</div>
<div class="ab" style="left:85px;top:187px;width:9px;height:9px;border:1px solid #9a9a9a;background:linear-gradient(#fdfdfd,#e6e6e6)"></div>
<div class="ab" style="left:87px;top:191px;width:5px;height:1px;background:#222"></div>
<div class="ab" style="left:89px;top:189px;width:1px;height:5px;background:#222"></div>
<svg class="ab" style="left:102px;top:184px" width="12" height="11"><use href="#tbl"/></svg>
<div class="t tr" style="left:121.5px;top:184px;color:#000">dbo.MSSQLogQueryString</div>
<div class="ab" style="left:85px;top:205px;width:9px;height:9px;border:1px solid #9a9a9a;background:linear-gradient(#fdfdfd,#e6e6e6)"></div>
<div class="ab" style="left:87px;top:209px;width:5px;height:1px;background:#222"></div>
<div class="ab" style="left:89px;top:207px;width:1px;height:5px;background:#222"></div>
<svg class="ab" style="left:102px;top:202px" width="12" height="11"><use href="#tbl"/></svg>
<div class="t tr" style="left:121.5px;top:202px;color:#000">dbo.MSSQLogQuerySuggestion</div>
<div class="ab" style="left:85px;top:223px;width:9px;height:9px;border:1px solid #9a9a9a;background:linear-gradient(#fdfdfd,#e6e6e6)"></div>
<div class="ab" style="left:87px;top:227px;width:5px;height:1px;background:#222"></div>
<div class="ab" style="left:89px;top:225px;width:1px;height:5px;background:#222"></div>
<svg class="ab" style="left:102px;top:220px" width="12" height="11"><use href="#tbl"/></svg>
<div class="t tr" style="left:121.5px;top:220px;color:#000">dbo.MSSQLogQueryTerms</div>
<div class="ab" style="left:85px;top:241px;width:9px;height:9px;border:1px solid #9a9a9a;background:linear-gradient(#fdfdfd,#e6e6e6)"></div>
<div class="ab" style="left:87px;top:245px;width:5px;height:1px;background:#222"></div>
<div class="ab" style="left:89px;top:243px;width:1px;height:5px;background:#222"></div>
<svg class="ab" style="left:102px;top:238px" width="12" height="11"><use href="#tbl"/></svg>
<div class="ab" style="left:119px;top:235px;width:155px;height:18px;background:#3399ff;border:1px dotted #000"></div>
<div class="t tr" style="left:121.5px;top:238px;color:#fff">dbo.MSSQLogSearchCounts</div>
<div class="ab" style="left:85px;top:259px;width:9px;height:9px;border:1px solid #9a9a9a;background:linear-gradient(#fdfdfd,#e6e6e6)"></div>
<div class="ab" style="left:87px;top:263px;width:5px;height:1px;background:#222"></div>
<div class="ab" style="left:89px;top:261px;width:1px;height:5px;background:#222"></div>
<svg class="ab" style="left:102px;top:256px" width="12" height="11"><use href="#tbl"/></svg>
<div class="t tr" style="left:121.5px;top:256px;color:#000">dbo.MSSQLogSessionOwners</div>
<div class="ab" style="left:85px;top:277px;width:9px;height:9px;border:1px solid #9a9a9a;background:linear-gradient(#fdfdfd,#e6e6e6)"></div>
<div class="ab" style="left:87px;top:281px;width:5px;height:1px;background:#222"></div>
<div class="ab" style="left:89px;top:279px;width:1px;height:5px;background:#222"></div>
<svg class="ab" style="left:102px;top:274px" width="12" height="11"><use href="#tbl"/></svg>
<div class="t tr" style="left:121.5px;top:274px;color:#000">dbo.MSSQLogSessionPersonalQueries</div>
<div class="ab" style="left:85px;top:295px;width:9px;height:9px;border:1px solid #9a9a9a;background:linear-gradient(#fdfdfd,#e6e6e6)"></div>
<div class="ab" style="left:87px;top:299px;width:5px;height:1px;background:#222"></div>
<div class="ab" style="left:89px;top:297px;width:1px;height:5px;background:#222"></div>
<svg class="ab" style="left:102px;top:292px" width="12" height="11"><use href="#tbl"/></svg>
<div class="t tr" style="left:121.5px;top:292px;color:#000">dbo.MSSQLogSessionPropertyStats</div>
<div class="ab" style="left:85px;top:313px;width:9px;height:9px;border:1px solid #9a9a9a;background:linear-gradient(#fdfdfd,#e6e6e6)"></div>
<div class="ab" style="left:87px;top:317px;width:5px;height:1px;background:#222"></div>
<div class="ab" style="left:89px;top:315px;width:1px;height:5px;background:#222"></div>
<svg class="ab" style="left:102px;top:310px" width="12" height="11"><use href="#tbl"/></svg>
<div class="t tr" style="left:121.5px;top:310px;color:#000">dbo.MSSQLogSessionSearchCounts</div>
<div class="ab" style="left:85px;top:331px;width:9px;height:9px;border:1px solid #9a9a9a;background:linear-gradient(#fdfdfd,#e6e6e6)"></div>
<div class="ab" style="left:87px;top:335px;width:5px;height:1px;background:#222"></div>
<div class="ab" style="left:89px;top:333px;width:1px;height:5px;background:#222"></div>
<svg class="ab" style="left:102px;top:328px" width="12" height="11"><use href="#tbl"/></svg>
<div class="t tr" style="left:121.5px;top:328px;color:#000">dbo.MSSQLogSettings</div>
<div class="ab" style="left:85px;top:349px;width:9px;height:9px;border:1px solid #9a9a9a;background:linear-gradient(#fdfdfd,#e6e6e6)"></div>
<div class="ab" style="left:87px;top:353px;width:5px;height:1px;background:#222"></div>
<div class="ab" style="left:89px;top:351px;width:1px;height:5px;background:#222"></div>
<svg class="ab" style="left:102px;top:346px" width="12" height="11"><use href="#tbl"/></svg>
<div class="t tr" style="left:121.5px;top:346px;color:#000">dbo.MSSQLogTenantData</div>
<div class="ab" style="left:85px;top:367px;width:9px;height:9px;border:1px solid #9a9a9a;background:linear-gradient(#fdfdfd,#e6e6e6)"></div>
<div class="ab" style="left:87px;top:371px;width:5px;height:1px;background:#222"></div>
<div class="ab" style="left:89px;top:369px;width:1px;height:5px;background:#222"></div>
<svg class="ab" style="left:102px;top:364px" width="12" height="11"><use href="#tbl"/></svg>
<div class="t tr" style="left:121.5px;top:364px;color:#000">dbo.MSSQLogUrl</div>
<div class="ab" style="left:85px;top:385px;width:9px;height:9px;border:1px solid #9a9a9a;background:linear-gradient(#fdfdfd,#e6e6e6)"></div>
<div class="ab" style="left:87px;top:389px;width:5px;height:1px;background:#222"></div>
<div class="ab" style="left:89px;top:387px;width:1px;height:5px;background:#222"></div>
<svg class="ab" style="left:102px;top:382px" width="12" height="11"><use href="#tbl"/></svg>
<div class="t tr" style="left:121.5px;top:382px;color:#000">dbo.MSSQueryActions</div>
<div class="ab" style="left:85px;top:403px;width:9px;height:9px;border:1px solid #9a9a9a;background:linear-gradient(#fdfdfd,#e6e6e6)"></div>
<div class="ab" style="left:87px;top:407px;width:5px;height:1px;background:#222"></div>
<div class="ab" style="left:89px;top:405px;width:1px;height:5px;background:#222"></div>
<svg class="ab" style="left:102px;top:400px" width="12" height="11"><use href="#tbl"/></svg>
<div class="t tr" style="left:121.5px;top:400px;color:#000">dbo.MSSQueryComponents</div>
<div class="ab" style="left:85px;top:421px;width:9px;height:9px;border:1px solid #9a9a9a;background:linear-gradient(#fdfdfd,#e6e6e6)"></div>
<div class="ab" style="left:87px;top:425px;width:5px;height:1px;background:#222"></div>
<div class="ab" style="left:89px;top:423px;width:1px;height:5px;background:#222"></div>
<svg class="ab" style="left:102px;top:418px" width="12" height="11"><use href="#tbl"/></svg>
<div class="t tr" style="left:121.5px;top:418px;color:#000">dbo.MSSQueryComponentScheme</div>
<div class="ab" style="left:85px;top:439px;width:9px;height:9px;border:1px solid #9a9a9a;background:linear-gradient(#fdfdfd,#e6e6e6)"></div>
<div class="ab" style="left:87px;top:443px;width:5px;height:1px;background:#222"></div>
<div class="ab" style="left:89px;top:441px;width:1px;height:5px;background:#222"></div>
<svg class="ab" style="left:102px;top:436px" width="12" height="11"><use href="#tbl"/></svg>
<div class="t tr" style="left:121.5px;top:436px;color:#000">dbo.MSSQueryConditions</div>
<div class="ab" style="left:85px;top:457px;width:9px;height:9px;border:1px solid #9a9a9a;background:linear-gradient(#fdfdfd,#e6e6e6)"></div>
<div class="ab" style="left:87px;top:461px;width:5px;height:1px;background:#222"></div>
<div class="ab" style="left:89px;top:459px;width:1px;height:5px;background:#222"></div>
<svg class="ab" style="left:102px;top:454px" width="12" height="11"><use href="#tbl"/></svg>
<div class="t tr" style="left:121.5px;top:454px;color:#000">dbo.MSSQueryConfigurationSystem</div>
<div class="ab" style="left:85px;top:475px;width:9px;height:9px;border:1px solid #9a9a9a;background:linear-gradient(#fdfdfd,#e6e6e6)"></div>
<div class="ab" style="left:87px;top:479px;width:5px;height:1px;background:#222"></div>
<div class="ab" style="left:89px;top:477px;width:1px;height:5px;background:#222"></div>
<svg class="ab" style="left:102px;top:472px" width="12" height="11"><use href="#tbl"/></svg>
<div class="t tr" style="left:121.5px;top:472px;color:#000">dbo.MSSQueryParameters</div>
<div class="ab" style="left:85px;top:493px;width:9px;height:9px;border:1px solid #9a9a9a;background:linear-gradient(#fdfdfd,#e6e6e6)"></div>
<div class="ab" style="left:87px;top:497px;width:5px;height:1px;background:#222"></div>
<div class="ab" style="left:89px;top:495px;width:1px;height:5px;background:#222"></div>
<svg class="ab" style="left:102px;top:490px" width="12" height="11"><use href="#tbl"/></svg>
<div class="t tr" style="left:121.5px;top:490px;color:#000">dbo.MSSQueryPropertyExpressions</div>
<div class="ab" style="left:85px;top:511px;width:9px;height:9px;border:1px solid #9a9a9a;background:linear-gradient(#fdfdfd,#e6e6e6)"></div>
<div class="ab" style="left:87px;top:515px;width:5px;height:1px;background:#222"></div>
<div class="ab" style="left:89px;top:513px;width:1px;height:5px;background:#222"></div>
<svg class="ab" style="left:102px;top:508px" width="12" height="11"><use href="#tbl"/></svg>
<div class="t tr" style="left:121.5px;top:508px;color:#000">dbo.MSSQueryRuleBestBetMapping</div>
<div class="ab" style="left:85px;top:529px;width:9px;height:9px;border:1px solid #9a9a9a;background:linear-gradient(#fdfdfd,#e6e6e6)"></div>
<div class="ab" style="left:87px;top:533px;width:5px;height:1px;background:#222"></div>
<div class="ab" style="left:89px;top:531px;width:1px;height:5px;background:#222"></div>
<svg class="ab" style="left:102px;top:526px" width="12" height="11"><use href="#tbl"/></svg>
<div class="t tr" style="left:121.5px;top:526px;color:#000">dbo.MSSQueryRuleConsumerOptOut</div>
<div class="ab" style="left:85px;top:547px;width:9px;height:9px;border:1px solid #9a9a9a;background:linear-gradient(#fdfdfd,#e6e6e6)"></div>
<div class="ab" style="left:87px;top:551px;width:5px;height:1px;background:#222"></div>
<div class="ab" style="left:89px;top:549px;width:1px;height:5px;background:#222"></div>
<svg class="ab" style="left:102px;top:544px" width="12" height="11"><use href="#tbl"/></svg>
<div class="t tr" style="left:121.5px;top:544px;color:#000">dbo.MSSQueryRuleGroupMembership</div>
<div class="ab" style="left:85px;top:565px;width:9px;height:9px;border:1px solid #9a9a9a;background:linear-gradient(#fdfdfd,#e6e6e6)"></div>
<div class="ab" style="left:87px;top:569px;width:5px;height:1px;background:#222"></div>
<div class="ab" style="left:89px;top:567px;width:1px;height:5px;background:#222"></div>
<svg class="ab" style="left:102px;top:562px" width="12" height="11"><use href="#tbl"/></svg>
<div class="t tr" style="left:121.5px;top:562px;color:#000">dbo.MSSQueryRuleGroups</div>
<div class="ab" style="left:85px;top:583px;width:9px;height:9px;border:1px solid #9a9a9a;background:linear-gradient(#fdfdfd,#e6e6e6)"></div>
<div class="ab" style="left:87px;top:587px;width:5px;height:1px;background:#222"></div>
<div class="ab" style="left:89px;top:585px;width:1px;height:5px;background:#222"></div>
<svg class="ab" style="left:102px;top:580px" width="12" height="11"><use href="#tbl"/></svg>
<div class="t tr" style="left:121.5px;top:580px;color:#000">dbo.MSSQueryRules</div>
<div class="ab" style="left:85px;top:601px;width:9px;height:9px;border:1px solid #9a9a9a;background:linear-gradient(#fdfdfd,#e6e6e6)"></div>
<div class="ab" style="left:87px;top:605px;width:5px;height:1px;background:#222"></div>
<div class="ab" style="left:89px;top:603px;width:1px;height:5px;background:#222"></div>
<svg class="ab" style="left:102px;top:598px" width="12" height="11"><use href="#tbl"/></svg>
<div class="t tr" style="left:121.5px;top:598px;color:#000">dbo.MSSQuerySuggestionSettings</div>
<div class="ab" style="left:85px;top:619px;width:9px;height:9px;border:1px solid #9a9a9a;background:linear-gradient(#fdfdfd,#e6e6e6)"></div>
<div class="ab" style="left:87px;top:623px;width:5px;height:1px;background:#222"></div>
<div class="ab" style="left:89px;top:621px;width:1px;height:5px;background:#222"></div>
<svg class="ab" style="left:102px;top:616px" width="12" height="11"><use href="#tbl"/></svg>
<div class="t tr" style="left:121.5px;top:616px;color:#000">dbo.MSSQueryThrottlingSettings</div>
<div class="ab" style="left:85px;top:637px;width:9px;height:9px;border:1px solid #9a9a9a;background:linear-gradient(#fdfdfd,#e6e6e6)"></div>
<div class="ab" style="left:87px;top:641px;width:5px;height:1px;background:#222"></div>
<div class="ab" style="left:89px;top:639px;width:1px;height:5px;background:#222"></div>
<svg class="ab" style="left:102px;top:634px" width="12" height="11"><use href="#tbl"/></svg>
<div class="t tr" style="left:121.5px;top:634px;color:#000">dbo.MSSQueryTransforms</div>
<div class="ab" style="left:85px;top:655px;width:9px;height:9px;border:1px solid #9a9a9a;background:linear-gradient(#fdfdfd,#e6e6e6)"></div>
<div class="ab" style="left:87px;top:659px;width:5px;height:1px;background:#222"></div>
<div class="ab" style="left:89px;top:657px;width:1px;height:5px;background:#222"></div>
<svg class="ab" style="left:102px;top:652px" width="12" height="11"><use href="#tbl"/></svg>
<div class="t tr" style="left:121.5px;top:652px;color:#000">dbo.MSSRankingModels</div>
<div class="ab" style="left:85px;top:673px;width:9px;height:9px;border:1px solid #9a9a9a;background:linear-gradient(#fdfdfd,#e6e6e6)"></div>
<div class="ab" style="left:87px;top:677px;width:5px;height:1px;background:#222"></div>
<div class="ab" style="left:89px;top:675px;width:1px;height:5px;background:#222"></div>
<svg class="ab" style="left:102px;top:670px" width="12" height="11"><use href="#tbl"/></svg>
<div class="t tr" style="left:121.5px;top:670px;color:#000">dbo.MSSRefactoringTaskBatches</div>
<div class="ab" style="left:85px;top:691px;width:9px;height:9px;border:1px solid #9a9a9a;background:linear-gradient(#fdfdfd,#e6e6e6)"></div>
<div class="ab" style="left:87px;top:695px;width:5px;height:1px;background:#222"></div>
<div class="ab" style="left:89px;top:693px;width:1px;height:5px;background:#222"></div>
<svg class="ab" style="left:102px;top:688px" width="12" height="11"><use href="#tbl"/></svg>
<div class="t tr" style="left:121.5px;top:688px;color:#000">dbo.MSSRefactoringTaskParts</div>
<div class="ab" style="left:85px;top:709px;width:9px;height:9px;border:1px solid #9a9a9a;background:linear-gradient(#fdfdfd,#e6e6e6)"></div>
<div class="ab" style="left:87px;top:713px;width:5px;height:1px;background:#222"></div>
<div class="ab" style="left:89px;top:711px;width:1px;height:5px;background:#222"></div>
<svg class="ab" style="left:102px;top:706px" width="12" height="11"><use href="#tbl"/></svg>
<div class="t tr" style="left:121.5px;top:706px;color:#000">dbo.MSSRefactoringTasks</div>
<div class="ab" style="left:85px;top:727px;width:9px;height:9px;border:1px solid #9a9a9a;background:linear-gradient(#fdfdfd,#e6e6e6)"></div>
<div class="ab" style="left:87px;top:731px;width:5px;height:1px;background:#222"></div>
<div class="ab" style="left:89px;top:729px;width:1px;height:5px;background:#222"></div>
<svg class="ab" style="left:102px;top:724px" width="12" height="11"><use href="#tbl"/></svg>
<div class="t tr" style="left:121.5px;top:724px;color:#000">dbo.MSSRegisteredConsumers</div>
<div class="ab" style="left:85px;top:745px;width:9px;height:9px;border:1px solid #9a9a9a;background:linear-gradient(#fdfdfd,#e6e6e6)"></div>
<div class="ab" style="left:87px;top:749px;width:5px;height:1px;background:#222"></div>
<div class="ab" style="left:89px;top:747px;width:1px;height:5px;background:#222"></div>
<svg class="ab" style="left:102px;top:742px" width="12" height="11"><use href="#tbl"/></svg>
<div class="t tr" style="left:121.5px;top:742px;color:#000">dbo.MSSResultItemTypes</div>
<div class="ab" style="left:85px;top:763px;width:9px;height:9px;border:1px solid #9a9a9a;background:linear-gradient(#fdfdfd,#e6e6e6)"></div>
<div class="ab" style="left:87px;top:767px;width:5px;height:1px;background:#222"></div>
<div class="ab" style="left:89px;top:765px;width:1px;height:5px;background:#222"></div>
<svg class="ab" style="left:102px;top:760px" width="12" height="11"><use href="#tbl"/></svg>
<div class="t tr" style="left:121.5px;top:760px;color:#000">dbo.MSSSchemaHighLevelProps</div>
</div>
<div class="ab" style="left:471px;top:147px;width:17px;height:775px;background:#fff;border-left:1px solid #e0e0e0;border-right:1px solid #c4c4c4"></div>
<div class="ab" style="left:472px;top:148px;width:16px;height:17px;border:1px solid #c8c8c8;background:#fff"></div>
<svg class="ab" style="left:474px;top:152px" width="12" height="8" viewBox="0 0 12 8"><path d="M2 6L6 2L10 6" stroke="#707070" stroke-width="1.3" fill="none"/></svg>
<div class="ab" style="left:472px;top:486px;width:16px;height:144px;border:1px solid #b0b0b0;background:#dedede"></div>
<div class="ab" style="left:472px;top:904px;width:16px;height:17px;border:1px solid #c8c8c8;background:#fff"></div>
<svg class="ab" style="left:474px;top:909px" width="12" height="8" viewBox="0 0 12 8"><path d="M2 2L6 6L10 2" stroke="#707070" stroke-width="1.3" fill="none"/></svg>
<div class="ab" style="left:476px;top:555px;width:7px;height:1px;background:#555;box-shadow:0 2px #555,0 4px #555"></div>
<div class="ab" style="left:0;top:929px;width:1712px;height:23px;background:#293955"></div>
<div class="ab" style="left:496px;top:120px;width:1210px;height:802px;background:#f0f0f0"></div>
<div class="ab" style="left:496px;top:120px;width:1210px;height:5px;background:#d5dce8;border-radius:0 3px 0 0"></div>
<div class="ab" style="left:496px;top:101px;width:243px;height:20px;background:linear-gradient(#fcfcfd,#e9edf3 50%,#d5dce8);border-radius:3px 3px 0 0"></div>
<div class="t su" style="left:500px;top:106px;color:#000">SQLQuery44.sql - W...Administrator (74))</div>
<svg class="ab" style="left:723px;top:105px" width="11" height="11" viewBox="0 0 11 11"><path d="M1.5 1.5L9.5 9.5M9.5 1.5L1.5 9.5" stroke="#5a5a5a" stroke-width="1.5"/></svg>
<div class="t su" style="left:744px;top:106px;color:#fff">SQLQuery37.sql - W...Administrator (71))</div>
<div class="t su" style="left:989px;top:106px;color:#fff">SQLQuery43.sql - W...Administrator (79))*</div>
<div class="t su" style="left:1239px;top:106px;color:#fff">SQLQuery40.sql - W...Administrator (65))*</div>
<div class="ab" style="left:1691px;top:107px;width:9px;height:2px;background:#ced4de"></div>
<svg class="ab" style="left:1691px;top:110px" width="9" height="5" viewBox="0 0 9 5"><path d="M0 0H9L4.5 5z" fill="#ced4de"/></svg>
<div class="ab" style="left:496px;top:125px;width:1193px;height:380px;background:#fff"></div>
<div class="ab" style="left:496px;top:125px;width:17px;height:380px;background:#efefef"></div>
<div class="ab" style="left:523px;top:145px;width:9px;height:9px;border:1px solid #808080;background:#fff"></div>
<div class="ab" style="left:525px;top:149px;width:5px;height:1px;background:#404040"></div>
<div class="ab" style="left:528px;top:154px;width:1px;height:163px;background:#a0a0a0"></div>
<div class="ab" style="left:528px;top:316px;width:4px;height:1px;background:#a0a0a0"></div>
<div class="t" style="left:534px;top:125px;font-family:'Liberation Mono', monospace;font-size:11.67px;line-height:16px;-webkit-text-stroke:0.2px currentColor"><span style="color:#008000">/******&nbsp;Script&nbsp;for&nbsp;SelectTopNRows&nbsp;command&nbsp;from&nbsp;SSMS&nbsp;&nbsp;******/</span></div>
<div class="t" style="left:534px;top:141px;font-family:'Liberation Mono', monospace;font-size:11.67px;line-height:16px;-webkit-text-stroke:0.2px currentColor"><span style="color:#0000ff">SELECT</span><span style="color:#000">&nbsp;</span><span style="color:#0000ff">TOP</span><span style="color:#000">&nbsp;1000&nbsp;</span><span style="color:#008080">[QueryId]</span></div>
<div class="t" style="left:534px;top:157px;font-family:'Liberation Mono', monospace;font-size:11.67px;line-height:16px;-webkit-text-stroke:0.2px currentColor"><span style="color:#000">&nbsp;&nbsp;&nbsp;&nbsp;&nbsp;&nbsp;</span><span style="color:#808080">,</span><span style="color:#008080">[QueryCount]</span></div>
<div class="t" style="left:534px;top:173px;font-family:'Liberation Mono', monospace;font-size:11.67px;line-height:16px;-webkit-text-stroke:0.2px currentColor"><span style="color:#000">&nbsp;&nbsp;&nbsp;&nbsp;&nbsp;&nbsp;</span><span style="color:#808080">,</span><span style="color:#008080">[TermCount]</span></div>
<div class="t" style="left:534px;top:189px;font-family:'Liberation Mono', monospace;font-size:11.67px;line-height:16px;-webkit-text-stroke:0.2px currentColor"><span style="color:#000">&nbsp;&nbsp;&nbsp;&nbsp;&nbsp;&nbsp;</span><span style="color:#808080">,</span><span style="color:#008080">[IsDeleted]</span></div>
<div class="t" style="left:534px;top:205px;font-family:'Liberation Mono', monospace;font-size:11.67px;line-height:16px;-webkit-text-stroke:0.2px currentColor"><span style="color:#000">&nbsp;&nbsp;&nbsp;&nbsp;&nbsp;&nbsp;</span><span style="color:#808080">,</span><span style="color:#008080">[QueryString]</span></div>
<div class="t" style="left:534px;top:221px;font-family:'Liberation Mono', monospace;font-size:11.67px;line-height:16px;-webkit-text-stroke:0.2px currentColor"><span style="color:#000">&nbsp;&nbsp;&nbsp;&nbsp;&nbsp;&nbsp;</span><span style="color:#808080">,</span><span style="color:#008080">[QueryStringHash]</span></div>
<div class="t" style="left:534px;top:237px;font-family:'Liberation Mono', monospace;font-size:11.67px;line-height:16px;-webkit-text-stroke:0.2px currentColor"><span style="color:#000">&nbsp;&nbsp;&nbsp;&nbsp;&nbsp;&nbsp;</span><span style="color:#808080">,</span><span style="color:#008080">[OwnerId]</span></div>
<div class="t" style="left:534px;top:253px;font-family:'Liberation Mono', monospace;font-size:11.67px;line-height:16px;-webkit-text-stroke:0.2px currentColor"><span style="color:#000">&nbsp;&nbsp;&nbsp;&nbsp;&nbsp;&nbsp;</span><span style="color:#808080">,</span><span style="color:#008080">[ClickCount]</span></div>
<div class="t" style="left:534px;top:269px;font-family:'Liberation Mono', monospace;font-size:11.67px;line-height:16px;-webkit-text-stroke:0.2px currentColor"><span style="color:#000">&nbsp;&nbsp;&nbsp;&nbsp;&nbsp;&nbsp;</span><span style="color:#808080">,</span><span style="color:#008080">[LCID]</span></div>
<div class="t" style="left:534px;top:285px;font-family:'Liberation Mono', monospace;font-size:11.67px;line-height:16px;-webkit-text-stroke:0.2px currentColor"><span style="color:#000">&nbsp;&nbsp;&nbsp;&nbsp;&nbsp;&nbsp;</span><span style="color:#808080">,</span><span style="color:#008080">[AlwaysSuggest]</span></div>
<div class="t" style="left:534px;top:301px;font-family:'Liberation Mono', monospace;font-size:11.67px;line-height:16px;-webkit-text-stroke:0.2px currentColor"><span style="color:#000">&nbsp;&nbsp;</span><span style="color:#0000ff">FROM</span><span style="color:#000">&nbsp;</span><span style="color:#008080">[SP2013&nbsp;Search]</span><span style="color:#808080">.</span><span style="color:#008080">[dbo]</span><span style="color:#808080">.</span><span style="color:#008080">[MSSQLogSearchCounts]</span></div>
<div class="ab" style="left:1689px;top:125px;width:17px;height:380px;background:#fff;border-left:1px solid #e6e6e6"></div>
<div class="ab" style="left:1689px;top:125px;width:17px;height:17px;background:linear-gradient(#eef1f6,#d8dee8);border:1px solid #c3cad6"></div>
<svg class="ab" style="left:1691px;top:126px" width="14" height="15" viewBox="0 0 14 15"><path d="M1 6.5H13M1 8.5H13" stroke="#000" stroke-width="1"/><path d="M7 1L4 4H10z M7 14L4 11H10z" fill="#000"/><path d="M7 3V6M7 9V12" stroke="#000"/></svg>
<div class="ab" style="left:1690px;top:142px;width:16px;height:17px;background:#fff"></div>
<svg class="ab" style="left:1692px;top:146px" width="12" height="8" viewBox="0 0 12 8"><path d="M2 6L6 2L10 6" stroke="#707070" stroke-width="1.3" fill="none"/></svg>
<div class="ab" style="left:1690px;top:159px;width:16px;height:225px;background:#dcdcdc;border:1px solid #b8b8b8"></div>
<div class="ab" style="left:1694px;top:268px;width:7px;height:1px;background:#555;box-shadow:0 2px #555,0 4px #555"></div>
<div class="ab" style="left:1690px;top:489px;width:16px;height:16px;background:#fff;border:1px solid #c8c8c8"></div>
<svg class="ab" style="left:1692px;top:493px" width="12" height="8" viewBox="0 0 12 8"><path d="M2 2L6 6L10 2" stroke="#707070" stroke-width="1.3" fill="none"/></svg>
<div class="ab" style="left:496px;top:505px;width:1210px;height:16px;background:#f0f0f0"></div>
<div class="t" style="left:500px;top:508px;font-size:11px;color:#000">100 %</div>
<svg class="ab" style="left:545px;top:511px" width="7" height="4" viewBox="0 0 7 4"><path d="M0 0H7L3.5 4z" fill="#222"/></svg>
<div class="ab" style="left:556px;top:505px;width:1133px;height:17px;background:#fff;border:1px solid #c8c8c8"></div>
<div class="ab" style="left:556px;top:505px;width:17px;height:17px;border:1px solid #c8c8c8;background:#fff"></div>
<svg class="ab" style="left:559px;top:508px" width="10" height="10" viewBox="0 0 10 10"><path d="M6.5 1.5L3 5L6.5 8.5" stroke="#707070" stroke-width="1.3" fill="none"/></svg>
<div class="ab" style="left:1672px;top:505px;width:17px;height:17px;border:1px solid #c8c8c8;background:#fff"></div>
<svg class="ab" style="left:1675px;top:508px" width="10" height="10" viewBox="0 0 10 10"><path d="M3.5 1.5L7 5L3.5 8.5" stroke="#707070" stroke-width="1.3" fill="none"/></svg>
<div class="ab" style="left:1689px;top:505px;width:17px;height:16px;background:#fff"></div>
<div class="ab" style="left:497px;top:526px;width:72px;height:22px;background:#fff;border:1px solid #a8a8a8;border-bottom:0"></div>
<div class="t" style="left:526px;top:532px;font-size:11px;letter-spacing:-0.3px">Results</div>
<div class="ab" style="left:568px;top:528px;width:81px;height:20px;background:#f3f3f3;border:1px solid #a8a8a8;border-bottom:0"></div>
<div class="t" style="left:595px;top:533px;font-size:11px;letter-spacing:-0.3px">Messages</div>
<svg class="ab" style="left:505px;top:530px" width="14" height="13" viewBox="0 0 14 13"><rect x="0" y="0" width="14" height="13" fill="#5a6478"/><rect x="1" y="1" width="12" height="2" fill="#5d8ee0"/><rect x="1" y="3" width="12" height="9" fill="#e8eef8"/><rect x="5" y="3" width="1" height="9" fill="#9aaac8"/><rect x="9" y="3" width="1" height="9" fill="#9aaac8"/><rect x="1" y="6" width="12" height="1" fill="#9aaac8"/><rect x="1" y="9" width="12" height="1" fill="#9aaac8"/></svg>
<svg class="ab" style="left:574px;top:530px" width="18" height="17" viewBox="0 0 18 17"><rect x="1" y="1" width="8" height="14" fill="#dfe6ee" stroke="#7a8698"/><rect x="2" y="2" width="6" height="2" fill="#9ab4d8"/><rect x="2" y="6" width="6" height="1" fill="#9aa8b8"/><rect x="7" y="6" width="9" height="10" fill="#f4f6f8" stroke="#4a5a78"/><rect x="9" y="8" width="2" height="1" fill="#e04040"/><rect x="12" y="8" width="3" height="1" fill="#50a050"/><rect x="9" y="10" width="2" height="1" fill="#e04040"/><rect x="12" y="10" width="3" height="1" fill="#e04040"/><rect x="9" y="12" width="2" height="1" fill="#e04040"/><rect x="12" y="12" width="3" height="1" fill="#50a050"/><rect x="3" y="12" width="2" height="1" fill="#50b050"/></svg>
<div class="ab" style="left:496px;top:548px;width:1210px;height:348px;background:#fff"></div>
<div class="ab" style="left:568px;top:547px;width:1138px;height:1px;background:#a0a0a0"></div>
<div class="ab" style="left:500px;top:549px;width:1202px;height:343px;background:#fff;border:1px solid #a8a8a8"></div>
<div class="ab" style="left:501px;top:550px;width:811px;height:18px;background:linear-gradient(#fcfcfc,#f1f1f1)"></div>
<div class="ab" style="left:501px;top:550px;width:32px;height:18px;border-left:1px solid #fff;border-right:1px solid #d8d8d8;border-bottom:1px solid #d5d5d5"></div>
<div class="ab" style="left:533px;top:550px;width:54px;height:18px;border-left:1px solid #fff;border-right:1px solid #d8d8d8;border-bottom:1px solid #d5d5d5"></div>
<div class="t" style="left:537px;top:553px;font-size:12.4px;transform:scaleX(0.837);transform-origin:0 0">QueryId</div>
<div class="ab" style="left:587px;top:550px;width:74px;height:18px;border-left:1px solid #fff;border-right:1px solid #d8d8d8;border-bottom:1px solid #d5d5d5"></div>
<div class="t" style="left:591px;top:553px;font-size:12.4px;transform:scaleX(0.837);transform-origin:0 0">QueryCount</div>
<div class="ab" style="left:661px;top:550px;width:70px;height:18px;border-left:1px solid #fff;border-right:1px solid #d8d8d8;border-bottom:1px solid #d5d5d5"></div>
<div class="t" style="left:665px;top:553px;font-size:12.4px;transform:scaleX(0.837);transform-origin:0 0">TermCount</div>
<div class="ab" style="left:731px;top:550px;width:61px;height:18px;border-left:1px solid #fff;border-right:1px solid #d8d8d8;border-bottom:1px solid #d5d5d5"></div>
<div class="t" style="left:735px;top:553px;font-size:12.4px;transform:scaleX(0.837);transform-origin:0 0">IsDeleted</div>
<div class="ab" style="left:792px;top:550px;width:165px;height:18px;border-left:1px solid #fff;border-right:1px solid #d8d8d8;border-bottom:1px solid #d5d5d5"></div>
<div class="t" style="left:796px;top:553px;font-size:12.4px;transform:scaleX(0.837);transform-origin:0 0">QueryString</div>
<div class="ab" style="left:957px;top:550px;width:100px;height:18px;border-left:1px solid #fff;border-right:1px solid #d8d8d8;border-bottom:1px solid #d5d5d5"></div>
<div class="t" style="left:961px;top:553px;font-size:12.4px;transform:scaleX(0.837);transform-origin:0 0">QueryStringHash</div>
<div class="ab" style="left:1057px;top:550px;width:56px;height:18px;border-left:1px solid #fff;border-right:1px solid #d8d8d8;border-bottom:1px solid #d5d5d5"></div>
<div class="t" style="left:1061px;top:553px;font-size:12.4px;transform:scaleX(0.837);transform-origin:0 0">OwnerId</div>
<div class="ab" style="left:1113px;top:550px;width:68px;height:18px;border-left:1px solid #fff;border-right:1px solid #d8d8d8;border-bottom:1px solid #d5d5d5"></div>
<div class="t" style="left:1117px;top:553px;font-size:12.4px;transform:scaleX(0.837);transform-origin:0 0">ClickCount</div>
<div class="ab" style="left:1181px;top:550px;width:40px;height:18px;border-left:1px solid #fff;border-right:1px solid #d8d8d8;border-bottom:1px solid #d5d5d5"></div>
<div class="t" style="left:1185px;top:553px;font-size:12.4px;transform:scaleX(0.837);transform-origin:0 0">LCID</div>
<div class="ab" style="left:1221px;top:550px;width:91px;height:18px;border-left:1px solid #fff;border-right:1px solid #d8d8d8;border-bottom:1px solid #d5d5d5"></div>
<div class="t" style="left:1225px;top:553px;font-size:12.4px;transform:scaleX(0.837);transform-origin:0 0">AlwaysSuggest</div>
<div class="ab" style="left:501px;top:569px;width:32px;height:19px;background:#f7f7f7;border:1px solid #e4e4e4;border-left-color:#fff;border-top-color:#fff"></div>
<div class="t" style="left:507px;top:572px;font-size:12.4px;transform:scaleX(0.837);transform-origin:0 0">94</div>
<div class="ab" style="left:533px;top:569px;width:54px;height:19px;border-right:1px solid #e8e8e8;border-bottom:1px solid #e8e8e8"></div>
<div class="t" style="left:540px;top:572px;font-size:12.4px;transform:scaleX(0.837);transform-origin:0 0">1033</div>
<div class="ab" style="left:587px;top:569px;width:74px;height:19px;border-right:1px solid #e8e8e8;border-bottom:1px solid #e8e8e8"></div>
<div class="t" style="left:594px;top:572px;font-size:12.4px;transform:scaleX(0.837);transform-origin:0 0">0</div>
<div class="ab" style="left:661px;top:569px;width:70px;height:19px;border-right:1px solid #e8e8e8;border-bottom:1px solid #e8e8e8"></div>
<div class="t" style="left:668px;top:572px;font-size:12.4px;transform:scaleX(0.837);transform-origin:0 0">0</div>
<div class="ab" style="left:731px;top:569px;width:61px;height:19px;border-right:1px solid #e8e8e8;border-bottom:1px solid #e8e8e8"></div>
<div class="t" style="left:738px;top:572px;font-size:12.4px;transform:scaleX(0.837);transform-origin:0 0">0</div>
<div class="ab" style="left:792px;top:569px;width:165px;height:19px;border-right:1px solid #e8e8e8;border-bottom:1px solid #e8e8e8"></div>
<div class="t" style="left:799px;top:572px;font-size:12.4px;transform:scaleX(0.837);transform-origin:0 0">A1bala hi test41</div>
<div class="ab" style="left:957px;top:569px;width:100px;height:19px;border-right:1px solid #e8e8e8;border-bottom:1px solid #e8e8e8"></div>
<div class="t" style="left:964px;top:572px;font-size:12.4px;transform:scaleX(0.837);transform-origin:0 0">1362788581</div>
<div class="ab" style="left:1057px;top:569px;width:56px;height:19px;border-right:1px solid #e8e8e8;border-bottom:1px solid #e8e8e8"></div>
<div class="t" style="left:1064px;top:572px;font-size:12.4px;transform:scaleX(0.837);transform-origin:0 0">1025</div>
<div class="ab" style="left:1113px;top:569px;width:68px;height:19px;border-right:1px solid #e8e8e8;border-bottom:1px solid #e8e8e8"></div>
<div class="t" style="left:1120px;top:572px;font-size:12.4px;transform:scaleX(0.837);transform-origin:0 0">0</div>
<div class="ab" style="left:1181px;top:569px;width:40px;height:19px;border-right:1px solid #e8e8e8;border-bottom:1px solid #e8e8e8"></div>
<div class="t" style="left:1188px;top:572px;font-size:12.4px;transform:scaleX(0.837);transform-origin:0 0">1033</div>
<div class="ab" style="left:1221px;top:569px;width:91px;height:19px;border-right:1px solid #e8e8e8;border-bottom:1px solid #e8e8e8"></div>
<div class="t" style="left:1228px;top:572px;font-size:12.4px;transform:scaleX(0.837);transform-origin:0 0">1</div>
<div class="ab" style="left:501px;top:588px;width:32px;height:19px;background:#f7f7f7;border:1px solid #e4e4e4;border-left-color:#fff;border-top-color:#fff"></div>
<div class="t" style="left:507px;top:591px;font-size:12.4px;transform:scaleX(0.837);transform-origin:0 0">95</div>
<div class="ab" style="left:533px;top:588px;width:54px;height:19px;border-right:1px solid #e8e8e8;border-bottom:1px solid #e8e8e8"></div>
<div class="t" style="left:540px;top:591px;font-size:12.4px;transform:scaleX(0.837);transform-origin:0 0">1034</div>
<div class="ab" style="left:587px;top:588px;width:74px;height:19px;border-right:1px solid #e8e8e8;border-bottom:1px solid #e8e8e8"></div>
<div class="t" style="left:594px;top:591px;font-size:12.4px;transform:scaleX(0.837);transform-origin:0 0">100</div>
<div class="ab" style="left:661px;top:588px;width:70px;height:19px;border-right:1px solid #e8e8e8;border-bottom:1px solid #e8e8e8"></div>
<div class="t" style="left:668px;top:591px;font-size:12.4px;transform:scaleX(0.837);transform-origin:0 0">0</div>
<div class="ab" style="left:731px;top:588px;width:61px;height:19px;border-right:1px solid #e8e8e8;border-bottom:1px solid #e8e8e8"></div>
<div class="t" style="left:738px;top:591px;font-size:12.4px;transform:scaleX(0.837);transform-origin:0 0">0</div>
<div class="ab" style="left:792px;top:588px;width:165px;height:19px;border-right:1px solid #e8e8e8;border-bottom:1px solid #e8e8e8"></div>
<div class="t" style="left:799px;top:591px;font-size:12.4px;transform:scaleX(0.837);transform-origin:0 0">A1bala hi txt41</div>
<div class="ab" style="left:957px;top:588px;width:100px;height:19px;border-right:1px solid #e8e8e8;border-bottom:1px solid #e8e8e8"></div>
<div class="t" style="left:964px;top:591px;font-size:12.4px;transform:scaleX(0.837);transform-origin:0 0">919960689</div>
<div class="ab" style="left:1057px;top:588px;width:56px;height:19px;border-right:1px solid #e8e8e8;border-bottom:1px solid #e8e8e8"></div>
<div class="t" style="left:1064px;top:591px;font-size:12.4px;transform:scaleX(0.837);transform-origin:0 0">1025</div>
<div class="ab" style="left:1113px;top:588px;width:68px;height:19px;border-right:1px solid #e8e8e8;border-bottom:1px solid #e8e8e8"></div>
<div class="t" style="left:1120px;top:591px;font-size:12.4px;transform:scaleX(0.837);transform-origin:0 0">80</div>
<div class="ab" style="left:1181px;top:588px;width:40px;height:19px;border-right:1px solid #e8e8e8;border-bottom:1px solid #e8e8e8"></div>
<div class="t" style="left:1188px;top:591px;font-size:12.4px;transform:scaleX(0.837);transform-origin:0 0">1033</div>
<div class="ab" style="left:1221px;top:588px;width:91px;height:19px;border-right:1px solid #e8e8e8;border-bottom:1px solid #e8e8e8"></div>
<div class="t" style="left:1228px;top:591px;font-size:12.4px;transform:scaleX(0.837);transform-origin:0 0">0</div>
<div class="ab" style="left:501px;top:607px;width:32px;height:19px;background:#f7f7f7;border:1px solid #e4e4e4;border-left-color:#fff;border-top-color:#fff"></div>
<div class="t" style="left:507px;top:610px;font-size:12.4px;transform:scaleX(0.837);transform-origin:0 0">96</div>
<div class="ab" style="left:533px;top:607px;width:54px;height:19px;border-right:1px solid #e8e8e8;border-bottom:1px solid #e8e8e8"></div>
<div class="t" style="left:540px;top:610px;font-size:12.4px;transform:scaleX(0.837);transform-origin:0 0">1035</div>
<div class="ab" style="left:587px;top:607px;width:74px;height:19px;border-right:1px solid #e8e8e8;border-bottom:1px solid #e8e8e8"></div>
<div class="t" style="left:594px;top:610px;font-size:12.4px;transform:scaleX(0.837);transform-origin:0 0">0</div>
<div class="ab" style="left:661px;top:607px;width:70px;height:19px;border-right:1px solid #e8e8e8;border-bottom:1px solid #e8e8e8"></div>
<div class="t" style="left:668px;top:610px;font-size:12.4px;transform:scaleX(0.837);transform-origin:0 0">0</div>
<div class="ab" style="left:731px;top:607px;width:61px;height:19px;border-right:1px solid #e8e8e8;border-bottom:1px solid #e8e8e8"></div>
<div class="t" style="left:738px;top:610px;font-size:12.4px;transform:scaleX(0.837);transform-origin:0 0">0</div>
<div class="ab" style="left:792px;top:607px;width:165px;height:19px;border-right:1px solid #e8e8e8;border-bottom:1px solid #e8e8e8"></div>
<div class="t" style="left:799px;top:610px;font-size:12.4px;transform:scaleX(0.837);transform-origin:0 0">A2bala hi test41</div>
<div class="ab" style="left:957px;top:607px;width:100px;height:19px;border-right:1px solid #e8e8e8;border-bottom:1px solid #e8e8e8"></div>
<div class="t" style="left:964px;top:610px;font-size:12.4px;transform:scaleX(0.837);transform-origin:0 0">12597462</div>
<div class="ab" style="left:1057px;top:607px;width:56px;height:19px;border-right:1px solid #e8e8e8;border-bottom:1px solid #e8e8e8"></div>
<div class="t" style="left:1064px;top:610px;font-size:12.4px;transform:scaleX(0.837);transform-origin:0 0">1025</div>
<div class="ab" style="left:1113px;top:607px;width:68px;height:19px;border-right:1px solid #e8e8e8;border-bottom:1px solid #e8e8e8"></div>
<div class="t" style="left:1120px;top:610px;font-size:12.4px;transform:scaleX(0.837);transform-origin:0 0">0</div>
<div class="ab" style="left:1181px;top:607px;width:40px;height:19px;border-right:1px solid #e8e8e8;border-bottom:1px solid #e8e8e8"></div>
<div class="t" style="left:1188px;top:610px;font-size:12.4px;transform:scaleX(0.837);transform-origin:0 0">1033</div>
<div class="ab" style="left:1221px;top:607px;width:91px;height:19px;border-right:1px solid #e8e8e8;border-bottom:1px solid #e8e8e8"></div>
<div class="t" style="left:1228px;top:610px;font-size:12.4px;transform:scaleX(0.837);transform-origin:0 0">1</div>
<div class="ab" style="left:501px;top:626px;width:32px;height:19px;background:#f7f7f7;border:1px solid #e4e4e4;border-left-color:#fff;border-top-color:#fff"></div>
<div class="t" style="left:507px;top:629px;font-size:12.4px;transform:scaleX(0.837);transform-origin:0 0">97</div>
<div class="ab" style="left:533px;top:626px;width:54px;height:19px;border-right:1px solid #e8e8e8;border-bottom:1px solid #e8e8e8"></div>
<div class="t" style="left:540px;top:629px;font-size:12.4px;transform:scaleX(0.837);transform-origin:0 0">1036</div>
<div class="ab" style="left:587px;top:626px;width:74px;height:19px;border-right:1px solid #e8e8e8;border-bottom:1px solid #e8e8e8"></div>
<div class="t" style="left:594px;top:629px;font-size:12.4px;transform:scaleX(0.837);transform-origin:0 0">80</div>
<div class="ab" style="left:661px;top:626px;width:70px;height:19px;border-right:1px solid #e8e8e8;border-bottom:1px solid #e8e8e8"></div>
<div class="t" style="left:668px;top:629px;font-size:12.4px;transform:scaleX(0.837);transform-origin:0 0">0</div>
<div class="ab" style="left:731px;top:626px;width:61px;height:19px;border-right:1px solid #e8e8e8;border-bottom:1px solid #e8e8e8"></div>
<div class="t" style="left:738px;top:629px;font-size:12.4px;transform:scaleX(0.837);transform-origin:0 0">0</div>
<div class="ab" style="left:792px;top:626px;width:165px;height:19px;border-right:1px solid #e8e8e8;border-bottom:1px solid #e8e8e8"></div>
<div class="t" style="left:799px;top:629px;font-size:12.4px;transform:scaleX(0.837);transform-origin:0 0">A2bala txt41</div>
<div class="ab" style="left:957px;top:626px;width:100px;height:19px;border-right:1px solid #e8e8e8;border-bottom:1px solid #e8e8e8"></div>
<div class="t" style="left:964px;top:629px;font-size:12.4px;transform:scaleX(0.837);transform-origin:0 0">2014645537</div>
<div class="ab" style="left:1057px;top:626px;width:56px;height:19px;border-right:1px solid #e8e8e8;border-bottom:1px solid #e8e8e8"></div>
<div class="t" style="left:1064px;top:629px;font-size:12.4px;transform:scaleX(0.837);transform-origin:0 0">1025</div>
<div class="ab" style="left:1113px;top:626px;width:68px;height:19px;border-right:1px solid #e8e8e8;border-bottom:1px solid #e8e8e8"></div>
<div class="t" style="left:1120px;top:629px;font-size:12.4px;transform:scaleX(0.837);transform-origin:0 0">50</div>
<div class="ab" style="left:1181px;top:626px;width:40px;height:19px;border-right:1px solid #e8e8e8;border-bottom:1px solid #e8e8e8"></div>
<div class="t" style="left:1188px;top:629px;font-size:12.4px;transform:scaleX(0.837);transform-origin:0 0">1033</div>
<div class="ab" style="left:1221px;top:626px;width:91px;height:19px;border-right:1px solid #e8e8e8;border-bottom:1px solid #e8e8e8"></div>
<div class="t" style="left:1228px;top:629px;font-size:12.4px;transform:scaleX(0.837);transform-origin:0 0">0</div>
<div class="ab" style="left:501px;top:645px;width:32px;height:19px;background:#f7f7f7;border:1px solid #e4e4e4;border-left-color:#fff;border-top-color:#fff"></div>
<div class="t" style="left:507px;top:648px;font-size:12.4px;transform:scaleX(0.837);transform-origin:0 0">98</div>
<div class="ab" style="left:533px;top:645px;width:54px;height:19px;border-right:1px solid #e8e8e8;border-bottom:1px solid #e8e8e8"></div>
<div class="t" style="left:540px;top:648px;font-size:12.4px;transform:scaleX(0.837);transform-origin:0 0">1051</div>
<div class="ab" style="left:587px;top:645px;width:74px;height:19px;border-right:1px solid #e8e8e8;border-bottom:1px solid #e8e8e8"></div>
<div class="t" style="left:594px;top:648px;font-size:12.4px;transform:scaleX(0.837);transform-origin:0 0">0</div>
<div class="ab" style="left:661px;top:645px;width:70px;height:19px;border-right:1px solid #e8e8e8;border-bottom:1px solid #e8e8e8"></div>
<div class="t" style="left:668px;top:648px;font-size:12.4px;transform:scaleX(0.837);transform-origin:0 0">0</div>
<div class="ab" style="left:731px;top:645px;width:61px;height:19px;border-right:1px solid #e8e8e8;border-bottom:1px solid #e8e8e8"></div>
<div class="t" style="left:738px;top:648px;font-size:12.4px;transform:scaleX(0.837);transform-origin:0 0">0</div>
<div class="ab" style="left:792px;top:645px;width:165px;height:19px;border-right:1px solid #e8e8e8;border-bottom:1px solid #e8e8e8"></div>
<div class="t" style="left:799px;top:648px;font-size:12.4px;transform:scaleX(0.837);transform-origin:0 0">XYZ Page1</div>
<div class="ab" style="left:957px;top:645px;width:100px;height:19px;border-right:1px solid #e8e8e8;border-bottom:1px solid #e8e8e8"></div>
<div class="t" style="left:964px;top:648px;font-size:12.4px;transform:scaleX(0.837);transform-origin:0 0">800262339</div>
<div class="ab" style="left:1057px;top:645px;width:56px;height:19px;border-right:1px solid #e8e8e8;border-bottom:1px solid #e8e8e8"></div>
<div class="t" style="left:1064px;top:648px;font-size:12.4px;transform:scaleX(0.837);transform-origin:0 0">1026</div>
<div class="ab" style="left:1113px;top:645px;width:68px;height:19px;border-right:1px solid #e8e8e8;border-bottom:1px solid #e8e8e8"></div>
<div class="t" style="left:1120px;top:648px;font-size:12.4px;transform:scaleX(0.837);transform-origin:0 0">0</div>
<div class="ab" style="left:1181px;top:645px;width:40px;height:19px;border-right:1px solid #e8e8e8;border-bottom:1px solid #e8e8e8"></div>
<div class="t" style="left:1188px;top:648px;font-size:12.4px;transform:scaleX(0.837);transform-origin:0 0">1033</div>
<div class="ab" style="left:1221px;top:645px;width:91px;height:19px;border-right:1px solid #e8e8e8;border-bottom:1px solid #e8e8e8"></div>
<div class="t" style="left:1228px;top:648px;font-size:12.4px;transform:scaleX(0.837);transform-origin:0 0">1</div>
<div class="ab" style="left:501px;top:664px;width:32px;height:19px;background:#f7f7f7;border:1px solid #e4e4e4;border-left-color:#fff;border-top-color:#fff"></div>
<div class="t" style="left:507px;top:667px;font-size:12.4px;transform:scaleX(0.837);transform-origin:0 0">99</div>
<div class="ab" style="left:533px;top:664px;width:54px;height:19px;border-right:1px solid #e8e8e8;border-bottom:1px solid #e8e8e8"></div>
<div class="t" style="left:540px;top:667px;font-size:12.4px;transform:scaleX(0.837);transform-origin:0 0">1052</div>
<div class="ab" style="left:587px;top:664px;width:74px;height:19px;border-right:1px solid #e8e8e8;border-bottom:1px solid #e8e8e8"></div>
<div class="t" style="left:594px;top:667px;font-size:12.4px;transform:scaleX(0.837);transform-origin:0 0">1100</div>
<div class="ab" style="left:661px;top:664px;width:70px;height:19px;border-right:1px solid #e8e8e8;border-bottom:1px solid #e8e8e8"></div>
<div class="t" style="left:668px;top:667px;font-size:12.4px;transform:scaleX(0.837);transform-origin:0 0">0</div>
<div class="ab" style="left:731px;top:664px;width:61px;height:19px;border-right:1px solid #e8e8e8;border-bottom:1px solid #e8e8e8"></div>
<div class="t" style="left:738px;top:667px;font-size:12.4px;transform:scaleX(0.837);transform-origin:0 0">0</div>
<div class="ab" style="left:792px;top:664px;width:165px;height:19px;border-right:1px solid #e8e8e8;border-bottom:1px solid #e8e8e8"></div>
<div class="t" style="left:799px;top:667px;font-size:12.4px;transform:scaleX(0.837);transform-origin:0 0">XYZ Page1 txt</div>
<div class="ab" style="left:957px;top:664px;width:100px;height:19px;border-right:1px solid #e8e8e8;border-bottom:1px solid #e8e8e8"></div>
<div class="t" style="left:964px;top:667px;font-size:12.4px;transform:scaleX(0.837);transform-origin:0 0">1321444642</div>
<div class="ab" style="left:1057px;top:664px;width:56px;height:19px;border-right:1px solid #e8e8e8;border-bottom:1px solid #e8e8e8"></div>
<div class="t" style="left:1064px;top:667px;font-size:12.4px;transform:scaleX(0.837);transform-origin:0 0">1026</div>
<div class="ab" style="left:1113px;top:664px;width:68px;height:19px;border-right:1px solid #e8e8e8;border-bottom:1px solid #e8e8e8"></div>
<div class="t" style="left:1120px;top:667px;font-size:12.4px;transform:scaleX(0.837);transform-origin:0 0">1180</div>
<div class="ab" style="left:1181px;top:664px;width:40px;height:19px;border-right:1px solid #e8e8e8;border-bottom:1px solid #e8e8e8"></div>
<div class="t" style="left:1188px;top:667px;font-size:12.4px;transform:scaleX(0.837);transform-origin:0 0">1033</div>
<div class="ab" style="left:1221px;top:664px;width:91px;height:19px;border-right:1px solid #e8e8e8;border-bottom:1px solid #e8e8e8"></div>
<div class="t" style="left:1228px;top:667px;font-size:12.4px;transform:scaleX(0.837);transform-origin:0 0">0</div>
<div class="ab" style="left:501px;top:683px;width:32px;height:19px;background:#f7f7f7;border:1px solid #e4e4e4;border-left-color:#fff;border-top-color:#fff"></div>
<div class="t" style="left:507px;top:686px;font-size:12.4px;transform:scaleX(0.837);transform-origin:0 0">100</div>
<div class="ab" style="left:533px;top:683px;width:54px;height:19px;border-right:1px solid #e8e8e8;border-bottom:1px solid #e8e8e8"></div>
<div class="t" style="left:540px;top:686px;font-size:12.4px;transform:scaleX(0.837);transform-origin:0 0">1053</div>
<div class="ab" style="left:587px;top:683px;width:74px;height:19px;border-right:1px solid #e8e8e8;border-bottom:1px solid #e8e8e8"></div>
<div class="t" style="left:594px;top:686px;font-size:12.4px;transform:scaleX(0.837);transform-origin:0 0">0</div>
<div class="ab" style="left:661px;top:683px;width:70px;height:19px;border-right:1px solid #e8e8e8;border-bottom:1px solid #e8e8e8"></div>
<div class="t" style="left:668px;top:686px;font-size:12.4px;transform:scaleX(0.837);transform-origin:0 0">0</div>
<div class="ab" style="left:731px;top:683px;width:61px;height:19px;border-right:1px solid #e8e8e8;border-bottom:1px solid #e8e8e8"></div>
<div class="t" style="left:738px;top:686px;font-size:12.4px;transform:scaleX(0.837);transform-origin:0 0">0</div>
<div class="ab" style="left:792px;top:683px;width:165px;height:19px;border-right:1px solid #e8e8e8;border-bottom:1px solid #e8e8e8"></div>
<div class="t" style="left:799px;top:686px;font-size:12.4px;transform:scaleX(0.837);transform-origin:0 0">XYZ Page2</div>
<div class="ab" style="left:957px;top:683px;width:100px;height:19px;border-right:1px solid #e8e8e8;border-bottom:1px solid #e8e8e8"></div>
<div class="t" style="left:964px;top:686px;font-size:12.4px;transform:scaleX(0.837);transform-origin:0 0">1068172717</div>
<div class="ab" style="left:1057px;top:683px;width:56px;height:19px;border-right:1px solid #e8e8e8;border-bottom:1px solid #e8e8e8"></div>
<div class="t" style="left:1064px;top:686px;font-size:12.4px;transform:scaleX(0.837);transform-origin:0 0">1026</div>
<div class="ab" style="left:1113px;top:683px;width:68px;height:19px;border-right:1px solid #e8e8e8;border-bottom:1px solid #e8e8e8"></div>
<div class="t" style="left:1120px;top:686px;font-size:12.4px;transform:scaleX(0.837);transform-origin:0 0">0</div>
<div class="ab" style="left:1181px;top:683px;width:40px;height:19px;border-right:1px solid #e8e8e8;border-bottom:1px solid #e8e8e8"></div>
<div class="t" style="left:1188px;top:686px;font-size:12.4px;transform:scaleX(0.837);transform-origin:0 0">1033</div>
<div class="ab" style="left:1221px;top:683px;width:91px;height:19px;border-right:1px solid #e8e8e8;border-bottom:1px solid #e8e8e8"></div>
<div class="t" style="left:1228px;top:686px;font-size:12.4px;transform:scaleX(0.837);transform-origin:0 0">1</div>
<div class="ab" style="left:501px;top:702px;width:32px;height:19px;background:#f7f7f7;border:1px solid #e4e4e4;border-left-color:#fff;border-top-color:#fff"></div>
<div class="t" style="left:507px;top:705px;font-size:12.4px;transform:scaleX(0.837);transform-origin:0 0">101</div>
<div class="ab" style="left:533px;top:702px;width:54px;height:19px;border-right:1px solid #e8e8e8;border-bottom:1px solid #e8e8e8"></div>
<div class="t" style="left:540px;top:705px;font-size:12.4px;transform:scaleX(0.837);transform-origin:0 0">1054</div>
<div class="ab" style="left:587px;top:702px;width:74px;height:19px;border-right:1px solid #e8e8e8;border-bottom:1px solid #e8e8e8"></div>
<div class="t" style="left:594px;top:705px;font-size:12.4px;transform:scaleX(0.837);transform-origin:0 0">1180</div>
<div class="ab" style="left:661px;top:702px;width:70px;height:19px;border-right:1px solid #e8e8e8;border-bottom:1px solid #e8e8e8"></div>
<div class="t" style="left:668px;top:705px;font-size:12.4px;transform:scaleX(0.837);transform-origin:0 0">0</div>
<div class="ab" style="left:731px;top:702px;width:61px;height:19px;border-right:1px solid #e8e8e8;border-bottom:1px solid #e8e8e8"></div>
<div class="t" style="left:738px;top:705px;font-size:12.4px;transform:scaleX(0.837);transform-origin:0 0">0</div>
<div class="ab" style="left:792px;top:702px;width:165px;height:19px;border-right:1px solid #e8e8e8;border-bottom:1px solid #e8e8e8"></div>
<div class="t" style="left:799px;top:705px;font-size:12.4px;transform:scaleX(0.837);transform-origin:0 0">XYZ Page2 txt</div>
<div class="ab" style="left:957px;top:702px;width:100px;height:19px;border-right:1px solid #e8e8e8;border-bottom:1px solid #e8e8e8"></div>
<div class="t" style="left:964px;top:705px;font-size:12.4px;transform:scaleX(0.837);transform-origin:0 0">971311353</div>
<div class="ab" style="left:1057px;top:702px;width:56px;height:19px;border-right:1px solid #e8e8e8;border-bottom:1px solid #e8e8e8"></div>
<div class="t" style="left:1064px;top:705px;font-size:12.4px;transform:scaleX(0.837);transform-origin:0 0">1026</div>
<div class="ab" style="left:1113px;top:702px;width:68px;height:19px;border-right:1px solid #e8e8e8;border-bottom:1px solid #e8e8e8"></div>
<div class="t" style="left:1120px;top:705px;font-size:12.4px;transform:scaleX(0.837);transform-origin:0 0">1150</div>
<div class="ab" style="left:1181px;top:702px;width:40px;height:19px;border-right:1px solid #e8e8e8;border-bottom:1px solid #e8e8e8"></div>
<div class="t" style="left:1188px;top:705px;font-size:12.4px;transform:scaleX(0.837);transform-origin:0 0">1033</div>
<div class="ab" style="left:1221px;top:702px;width:91px;height:19px;border-right:1px solid #e8e8e8;border-bottom:1px solid #e8e8e8"></div>
<div class="t" style="left:1228px;top:705px;font-size:12.4px;transform:scaleX(0.837);transform-origin:0 0">0</div>
<div class="ab" style="left:501px;top:721px;width:32px;height:19px;background:#f7f7f7;border:1px solid #e4e4e4;border-left-color:#fff;border-top-color:#fff"></div>
<div class="t" style="left:507px;top:724px;font-size:12.4px;transform:scaleX(0.837);transform-origin:0 0">102</div>
<div class="ab" style="left:533px;top:721px;width:54px;height:19px;border-right:1px solid #e8e8e8;border-bottom:1px solid #e8e8e8"></div>
<div class="t" style="left:540px;top:724px;font-size:12.4px;transform:scaleX(0.837);transform-origin:0 0">1051</div>
<div class="ab" style="left:587px;top:721px;width:74px;height:19px;border-right:1px solid #e8e8e8;border-bottom:1px solid #e8e8e8"></div>
<div class="t" style="left:594px;top:724px;font-size:12.4px;transform:scaleX(0.837);transform-origin:0 0">0</div>
<div class="ab" style="left:661px;top:721px;width:70px;height:19px;border-right:1px solid #e8e8e8;border-bottom:1px solid #e8e8e8"></div>
<div class="t" style="left:668px;top:724px;font-size:12.4px;transform:scaleX(0.837);transform-origin:0 0">0</div>
<div class="ab" style="left:731px;top:721px;width:61px;height:19px;border-right:1px solid #e8e8e8;border-bottom:1px solid #e8e8e8"></div>
<div class="t" style="left:738px;top:724px;font-size:12.4px;transform:scaleX(0.837);transform-origin:0 0">0</div>
<div class="ab" style="left:792px;top:721px;width:165px;height:19px;border-right:1px solid #e8e8e8;border-bottom:1px solid #e8e8e8"></div>
<div class="t" style="left:799px;top:724px;font-size:12.4px;transform:scaleX(0.837);transform-origin:0 0">XYZ Page1</div>
<div class="ab" style="left:957px;top:721px;width:100px;height:19px;border-right:1px solid #e8e8e8;border-bottom:1px solid #e8e8e8"></div>
<div class="t" style="left:964px;top:724px;font-size:12.4px;transform:scaleX(0.837);transform-origin:0 0">800262339</div>
<div class="ab" style="left:1057px;top:721px;width:56px;height:19px;border-right:1px solid #e8e8e8;border-bottom:1px solid #e8e8e8"></div>
<div class="t" style="left:1064px;top:724px;font-size:12.4px;transform:scaleX(0.837);transform-origin:0 0">1027</div>
<div class="ab" style="left:1113px;top:721px;width:68px;height:19px;border-right:1px solid #e8e8e8;border-bottom:1px solid #e8e8e8"></div>
<div class="t" style="left:1120px;top:724px;font-size:12.4px;transform:scaleX(0.837);transform-origin:0 0">0</div>
<div class="ab" style="left:1181px;top:721px;width:40px;height:19px;border-right:1px solid #e8e8e8;border-bottom:1px solid #e8e8e8"></div>
<div class="t" style="left:1188px;top:724px;font-size:12.4px;transform:scaleX(0.837);transform-origin:0 0">1033</div>
<div class="ab" style="left:1221px;top:721px;width:91px;height:19px;border-right:1px solid #e8e8e8;border-bottom:1px solid #e8e8e8"></div>
<div class="t" style="left:1228px;top:724px;font-size:12.4px;transform:scaleX(0.837);transform-origin:0 0">1</div>
<div class="ab" style="left:501px;top:740px;width:32px;height:19px;background:#f7f7f7;border:1px solid #e4e4e4;border-left-color:#fff;border-top-color:#fff"></div>
<div class="t" style="left:507px;top:743px;font-size:12.4px;transform:scaleX(0.837);transform-origin:0 0">103</div>
<div class="ab" style="left:533px;top:740px;width:54px;height:19px;border-right:1px solid #e8e8e8;border-bottom:1px solid #e8e8e8"></div>
<div class="t" style="left:540px;top:743px;font-size:12.4px;transform:scaleX(0.837);transform-origin:0 0">1052</div>
<div class="ab" style="left:587px;top:740px;width:74px;height:19px;border-right:1px solid #e8e8e8;border-bottom:1px solid #e8e8e8"></div>
<div class="t" style="left:594px;top:743px;font-size:12.4px;transform:scaleX(0.837);transform-origin:0 0">1100</div>
<div class="ab" style="left:661px;top:740px;width:70px;height:19px;border-right:1px solid #e8e8e8;border-bottom:1px solid #e8e8e8"></div>
<div class="t" style="left:668px;top:743px;font-size:12.4px;transform:scaleX(0.837);transform-origin:0 0">0</div>
<div class="ab" style="left:731px;top:740px;width:61px;height:19px;border-right:1px solid #e8e8e8;border-bottom:1px solid #e8e8e8"></div>
<div class="t" style="left:738px;top:743px;font-size:12.4px;transform:scaleX(0.837);transform-origin:0 0">0</div>
<div class="ab" style="left:792px;top:740px;width:165px;height:19px;border-right:1px solid #e8e8e8;border-bottom:1px solid #e8e8e8"></div>
<div class="t" style="left:799px;top:743px;font-size:12.4px;transform:scaleX(0.837);transform-origin:0 0">XYZ Page1 txt</div>
<div class="ab" style="left:957px;top:740px;width:100px;height:19px;border-right:1px solid #e8e8e8;border-bottom:1px solid #e8e8e8"></div>
<div class="t" style="left:964px;top:743px;font-size:12.4px;transform:scaleX(0.837);transform-origin:0 0">1321444642</div>
<div class="ab" style="left:1057px;top:740px;width:56px;height:19px;border-right:1px solid #e8e8e8;border-bottom:1px solid #e8e8e8"></div>
<div class="t" style="left:1064px;top:743px;font-size:12.4px;transform:scaleX(0.837);transform-origin:0 0">1027</div>
<div class="ab" style="left:1113px;top:740px;width:68px;height:19px;border-right:1px solid #e8e8e8;border-bottom:1px solid #e8e8e8"></div>
<div class="t" style="left:1120px;top:743px;font-size:12.4px;transform:scaleX(0.837);transform-origin:0 0">1180</div>
<div class="ab" style="left:1181px;top:740px;width:40px;height:19px;border-right:1px solid #e8e8e8;border-bottom:1px solid #e8e8e8"></div>
<div class="t" style="left:1188px;top:743px;font-size:12.4px;transform:scaleX(0.837);transform-origin:0 0">1033</div>
<div class="ab" style="left:1221px;top:740px;width:91px;height:19px;border-right:1px solid #e8e8e8;border-bottom:1px solid #e8e8e8"></div>
<div class="t" style="left:1228px;top:743px;font-size:12.4px;transform:scaleX(0.837);transform-origin:0 0">0</div>
<div class="ab" style="left:501px;top:759px;width:32px;height:19px;background:#f7f7f7;border:1px solid #e4e4e4;border-left-color:#fff;border-top-color:#fff"></div>
<div class="t" style="left:507px;top:762px;font-size:12.4px;transform:scaleX(0.837);transform-origin:0 0">104</div>
<div class="ab" style="left:533px;top:759px;width:54px;height:19px;border-right:1px solid #e8e8e8;border-bottom:1px solid #e8e8e8"></div>
<div class="t" style="left:540px;top:762px;font-size:12.4px;transform:scaleX(0.837);transform-origin:0 0">1053</div>
<div class="ab" style="left:587px;top:759px;width:74px;height:19px;border-right:1px solid #e8e8e8;border-bottom:1px solid #e8e8e8"></div>
<div class="t" style="left:594px;top:762px;font-size:12.4px;transform:scaleX(0.837);transform-origin:0 0">0</div>
<div class="ab" style="left:661px;top:759px;width:70px;height:19px;border-right:1px solid #e8e8e8;border-bottom:1px solid #e8e8e8"></div>
<div class="t" style="left:668px;top:762px;font-size:12.4px;transform:scaleX(0.837);transform-origin:0 0">0</div>
<div class="ab" style="left:731px;top:759px;width:61px;height:19px;border-right:1px solid #e8e8e8;border-bottom:1px solid #e8e8e8"></div>
<div class="t" style="left:738px;top:762px;font-size:12.4px;transform:scaleX(0.837);transform-origin:0 0">0</div>
<div class="ab" style="left:792px;top:759px;width:165px;height:19px;border-right:1px solid #e8e8e8;border-bottom:1px solid #e8e8e8"></div>
<div class="t" style="left:799px;top:762px;font-size:12.4px;transform:scaleX(0.837);transform-origin:0 0">XYZ Page2</div>
<div class="ab" style="left:957px;top:759px;width:100px;height:19px;border-right:1px solid #e8e8e8;border-bottom:1px solid #e8e8e8"></div>
<div class="t" style="left:964px;top:762px;font-size:12.4px;transform:scaleX(0.837);transform-origin:0 0">1068172717</div>
<div class="ab" style="left:1057px;top:759px;width:56px;height:19px;border-right:1px solid #e8e8e8;border-bottom:1px solid #e8e8e8"></div>
<div class="t" style="left:1064px;top:762px;font-size:12.4px;transform:scaleX(0.837);transform-origin:0 0">1027</div>
<div class="ab" style="left:1113px;top:759px;width:68px;height:19px;border-right:1px solid #e8e8e8;border-bottom:1px solid #e8e8e8"></div>
<div class="t" style="left:1120px;top:762px;font-size:12.4px;transform:scaleX(0.837);transform-origin:0 0">0</div>
<div class="ab" style="left:1181px;top:759px;width:40px;height:19px;border-right:1px solid #e8e8e8;border-bottom:1px solid #e8e8e8"></div>
<div class="t" style="left:1188px;top:762px;font-size:12.4px;transform:scaleX(0.837);transform-origin:0 0">1033</div>
<div class="ab" style="left:1221px;top:759px;width:91px;height:19px;border-right:1px solid #e8e8e8;border-bottom:1px solid #e8e8e8"></div>
<div class="t" style="left:1228px;top:762px;font-size:12.4px;transform:scaleX(0.837);transform-origin:0 0">1</div>
<div class="ab" style="left:501px;top:778px;width:32px;height:19px;background:#f7f7f7;border:1px solid #e4e4e4;border-left-color:#fff;border-top-color:#fff"></div>
<div class="t" style="left:507px;top:781px;font-size:12.4px;transform:scaleX(0.837);transform-origin:0 0">105</div>
<div class="ab" style="left:533px;top:778px;width:54px;height:19px;border-right:1px solid #e8e8e8;border-bottom:1px solid #e8e8e8"></div>
<div class="t" style="left:540px;top:781px;font-size:12.4px;transform:scaleX(0.837);transform-origin:0 0">1054</div>
<div class="ab" style="left:587px;top:778px;width:74px;height:19px;border-right:1px solid #e8e8e8;border-bottom:1px solid #e8e8e8"></div>
<div class="t" style="left:594px;top:781px;font-size:12.4px;transform:scaleX(0.837);transform-origin:0 0">1180</div>
<div class="ab" style="left:661px;top:778px;width:70px;height:19px;border-right:1px solid #e8e8e8;border-bottom:1px solid #e8e8e8"></div>
<div class="t" style="left:668px;top:781px;font-size:12.4px;transform:scaleX(0.837);transform-origin:0 0">0</div>
<div class="ab" style="left:731px;top:778px;width:61px;height:19px;border-right:1px solid #e8e8e8;border-bottom:1px solid #e8e8e8"></div>
<div class="t" style="left:738px;top:781px;font-size:12.4px;transform:scaleX(0.837);transform-origin:0 0">0</div>
<div class="ab" style="left:792px;top:778px;width:165px;height:19px;border-right:1px solid #e8e8e8;border-bottom:1px solid #e8e8e8"></div>
<div class="t" style="left:799px;top:781px;font-size:12.4px;transform:scaleX(0.837);transform-origin:0 0">XYZ Page2 txt</div>
<div class="ab" style="left:957px;top:778px;width:100px;height:19px;border-right:1px solid #e8e8e8;border-bottom:1px solid #e8e8e8"></div>
<div class="t" style="left:964px;top:781px;font-size:12.4px;transform:scaleX(0.837);transform-origin:0 0">971311353</div>
<div class="ab" style="left:1057px;top:778px;width:56px;height:19px;border-right:1px solid #e8e8e8;border-bottom:1px solid #e8e8e8"></div>
<div class="t" style="left:1064px;top:781px;font-size:12.4px;transform:scaleX(0.837);transform-origin:0 0">1027</div>
<div class="ab" style="left:1113px;top:778px;width:68px;height:19px;border-right:1px solid #e8e8e8;border-bottom:1px solid #e8e8e8"></div>
<div class="t" style="left:1120px;top:781px;font-size:12.4px;transform:scaleX(0.837);transform-origin:0 0">1150</div>
<div class="ab" style="left:1181px;top:778px;width:40px;height:19px;border-right:1px solid #e8e8e8;border-bottom:1px solid #e8e8e8"></div>
<div class="t" style="left:1188px;top:781px;font-size:12.4px;transform:scaleX(0.837);transform-origin:0 0">1033</div>
<div class="ab" style="left:1221px;top:778px;width:91px;height:19px;border-right:1px solid #e8e8e8;border-bottom:1px solid #e8e8e8"></div>
<div class="t" style="left:1228px;top:781px;font-size:12.4px;transform:scaleX(0.837);transform-origin:0 0">0</div>
<div class="ab" style="left:501px;top:797px;width:32px;height:19px;background:#f7f7f7;border:1px solid #e4e4e4;border-left-color:#fff;border-top-color:#fff"></div>
<div class="t" style="left:507px;top:800px;font-size:12.4px;transform:scaleX(0.837);transform-origin:0 0">106</div>
<div class="ab" style="left:533px;top:797px;width:54px;height:19px;border-right:1px solid #e8e8e8;border-bottom:1px solid #e8e8e8"></div>
<div class="t" style="left:540px;top:800px;font-size:12.4px;transform:scaleX(0.837);transform-origin:0 0">1055</div>
<div class="ab" style="left:587px;top:797px;width:74px;height:19px;border-right:1px solid #e8e8e8;border-bottom:1px solid #e8e8e8"></div>
<div class="t" style="left:594px;top:800px;font-size:12.4px;transform:scaleX(0.837);transform-origin:0 0">0</div>
<div class="ab" style="left:661px;top:797px;width:70px;height:19px;border-right:1px solid #e8e8e8;border-bottom:1px solid #e8e8e8"></div>
<div class="t" style="left:668px;top:800px;font-size:12.4px;transform:scaleX(0.837);transform-origin:0 0">0</div>
<div class="ab" style="left:731px;top:797px;width:61px;height:19px;border-right:1px solid #e8e8e8;border-bottom:1px solid #e8e8e8"></div>
<div class="t" style="left:738px;top:800px;font-size:12.4px;transform:scaleX(0.837);transform-origin:0 0">0</div>
<div class="ab" style="left:792px;top:797px;width:165px;height:19px;border-right:1px solid #e8e8e8;border-bottom:1px solid #e8e8e8"></div>
<div class="t" style="left:799px;top:800px;font-size:12.4px;transform:scaleX(0.837);transform-origin:0 0">SharePoint Community</div>
<div class="ab" style="left:957px;top:797px;width:100px;height:19px;border-right:1px solid #e8e8e8;border-bottom:1px solid #e8e8e8"></div>
<div class="t" style="left:964px;top:800px;font-size:12.4px;transform:scaleX(0.837);transform-origin:0 0">1781334934</div>
<div class="ab" style="left:1057px;top:797px;width:56px;height:19px;border-right:1px solid #e8e8e8;border-bottom:1px solid #e8e8e8"></div>
<div class="t" style="left:1064px;top:800px;font-size:12.4px;transform:scaleX(0.837);transform-origin:0 0">1028</div>
<div class="ab" style="left:1113px;top:797px;width:68px;height:19px;border-right:1px solid #e8e8e8;border-bottom:1px solid #e8e8e8"></div>
<div class="t" style="left:1120px;top:800px;font-size:12.4px;transform:scaleX(0.837);transform-origin:0 0">0</div>
<div class="ab" style="left:1181px;top:797px;width:40px;height:19px;border-right:1px solid #e8e8e8;border-bottom:1px solid #e8e8e8"></div>
<div class="t" style="left:1188px;top:800px;font-size:12.4px;transform:scaleX(0.837);transform-origin:0 0">1033</div>
<div class="ab" style="left:1221px;top:797px;width:91px;height:19px;border-right:1px solid #e8e8e8;border-bottom:1px solid #e8e8e8"></div>
<div class="t" style="left:1228px;top:800px;font-size:12.4px;transform:scaleX(0.837);transform-origin:0 0">1</div>
<div class="ab" style="left:501px;top:816px;width:32px;height:19px;background:#f7f7f7;border:1px solid #e4e4e4;border-left-color:#fff;border-top-color:#fff"></div>
<div class="t" style="left:507px;top:819px;font-size:12.4px;transform:scaleX(0.837);transform-origin:0 0">107</div>
<div class="ab" style="left:533px;top:816px;width:54px;height:19px;border-right:1px solid #e8e8e8;border-bottom:1px solid #e8e8e8"></div>
<div class="t" style="left:540px;top:819px;font-size:12.4px;transform:scaleX(0.837);transform-origin:0 0">1057</div>
<div class="ab" style="left:587px;top:816px;width:74px;height:19px;border-right:1px solid #e8e8e8;border-bottom:1px solid #e8e8e8"></div>
<div class="t" style="left:594px;top:819px;font-size:12.4px;transform:scaleX(0.837);transform-origin:0 0">0</div>
<div class="ab" style="left:661px;top:816px;width:70px;height:19px;border-right:1px solid #e8e8e8;border-bottom:1px solid #e8e8e8"></div>
<div class="t" style="left:668px;top:819px;font-size:12.4px;transform:scaleX(0.837);transform-origin:0 0">0</div>
<div class="ab" style="left:731px;top:816px;width:61px;height:19px;border-right:1px solid #e8e8e8;border-bottom:1px solid #e8e8e8"></div>
<div class="t" style="left:738px;top:819px;font-size:12.4px;transform:scaleX(0.837);transform-origin:0 0">0</div>
<div class="ab" style="left:792px;top:816px;width:165px;height:19px;border-right:1px solid #e8e8e8;border-bottom:1px solid #e8e8e8"></div>
<div class="t" style="left:799px;top:819px;font-size:12.4px;transform:scaleX(0.837);transform-origin:0 0">SharePoint Search</div>
<div class="ab" style="left:957px;top:816px;width:100px;height:19px;border-right:1px solid #e8e8e8;border-bottom:1px solid #e8e8e8"></div>
<div class="t" style="left:964px;top:819px;font-size:12.4px;transform:scaleX(0.837);transform-origin:0 0">721447948</div>
<div class="ab" style="left:1057px;top:816px;width:56px;height:19px;border-right:1px solid #e8e8e8;border-bottom:1px solid #e8e8e8"></div>
<div class="t" style="left:1064px;top:819px;font-size:12.4px;transform:scaleX(0.837);transform-origin:0 0">1028</div>
<div class="ab" style="left:1113px;top:816px;width:68px;height:19px;border-right:1px solid #e8e8e8;border-bottom:1px solid #e8e8e8"></div>
<div class="t" style="left:1120px;top:819px;font-size:12.4px;transform:scaleX(0.837);transform-origin:0 0">0</div>
<div class="ab" style="left:1181px;top:816px;width:40px;height:19px;border-right:1px solid #e8e8e8;border-bottom:1px solid #e8e8e8"></div>
<div class="t" style="left:1188px;top:819px;font-size:12.4px;transform:scaleX(0.837);transform-origin:0 0">1033</div>
<div class="ab" style="left:1221px;top:816px;width:91px;height:19px;border-right:1px solid #e8e8e8;border-bottom:1px solid #e8e8e8"></div>
<div class="t" style="left:1228px;top:819px;font-size:12.4px;transform:scaleX(0.837);transform-origin:0 0">1</div>
<div class="ab" style="left:501px;top:835px;width:32px;height:19px;background:#f7f7f7;border:1px solid #e4e4e4;border-left-color:#fff;border-top-color:#fff"></div>
<div class="t" style="left:507px;top:838px;font-size:12.4px;transform:scaleX(0.837);transform-origin:0 0">108</div>
<div class="ab" style="left:533px;top:835px;width:54px;height:19px;border-right:1px solid #e8e8e8;border-bottom:1px solid #e8e8e8"></div>
<div class="t" style="left:540px;top:838px;font-size:12.4px;transform:scaleX(0.837);transform-origin:0 0">1056</div>
<div class="ab" style="left:587px;top:835px;width:74px;height:19px;border-right:1px solid #e8e8e8;border-bottom:1px solid #e8e8e8"></div>
<div class="t" style="left:594px;top:838px;font-size:12.4px;transform:scaleX(0.837);transform-origin:0 0">1100</div>
<div class="ab" style="left:661px;top:835px;width:70px;height:19px;border-right:1px solid #e8e8e8;border-bottom:1px solid #e8e8e8"></div>
<div class="t" style="left:668px;top:838px;font-size:12.4px;transform:scaleX(0.837);transform-origin:0 0">0</div>
<div class="ab" style="left:731px;top:835px;width:61px;height:19px;border-right:1px solid #e8e8e8;border-bottom:1px solid #e8e8e8"></div>
<div class="t" style="left:738px;top:838px;font-size:12.4px;transform:scaleX(0.837);transform-origin:0 0">0</div>
<div class="ab" style="left:792px;top:835px;width:165px;height:19px;border-right:1px solid #e8e8e8;border-bottom:1px solid #e8e8e8"></div>
<div class="t" style="left:799px;top:838px;font-size:12.4px;transform:scaleX(0.837);transform-origin:0 0">SharePoint Community - Txt File</div>
<div class="ab" style="left:957px;top:835px;width:100px;height:19px;border-right:1px solid #e8e8e8;border-bottom:1px solid #e8e8e8"></div>
<div class="t" style="left:964px;top:838px;font-size:12.4px;transform:scaleX(0.837);transform-origin:0 0">1978789642</div>
<div class="ab" style="left:1057px;top:835px;width:56px;height:19px;border-right:1px solid #e8e8e8;border-bottom:1px solid #e8e8e8"></div>
<div class="t" style="left:1064px;top:838px;font-size:12.4px;transform:scaleX(0.837);transform-origin:0 0">1029</div>
<div class="ab" style="left:1113px;top:835px;width:68px;height:19px;border-right:1px solid #e8e8e8;border-bottom:1px solid #e8e8e8"></div>
<div class="t" style="left:1120px;top:838px;font-size:12.4px;transform:scaleX(0.837);transform-origin:0 0">1180</div>
<div class="ab" style="left:1181px;top:835px;width:40px;height:19px;border-right:1px solid #e8e8e8;border-bottom:1px solid #e8e8e8"></div>
<div class="t" style="left:1188px;top:838px;font-size:12.4px;transform:scaleX(0.837);transform-origin:0 0">1033</div>
<div class="ab" style="left:1221px;top:835px;width:91px;height:19px;border-right:1px solid #e8e8e8;border-bottom:1px solid #e8e8e8"></div>
<div class="t" style="left:1228px;top:838px;font-size:12.4px;transform:scaleX(0.837);transform-origin:0 0">0</div>
<div class="ab" style="left:501px;top:854px;width:32px;height:19px;background:#f7f7f7;border:1px solid #e4e4e4;border-left-color:#fff;border-top-color:#fff"></div>
<div class="t" style="left:507px;top:857px;font-size:12.4px;transform:scaleX(0.837);transform-origin:0 0">109</div>
<div class="ab" style="left:533px;top:854px;width:54px;height:19px;border-right:1px solid #e8e8e8;border-bottom:1px solid #e8e8e8"></div>
<div class="t" style="left:540px;top:857px;font-size:12.4px;transform:scaleX(0.837);transform-origin:0 0">1058</div>
<div class="ab" style="left:587px;top:854px;width:74px;height:19px;border-right:1px solid #e8e8e8;border-bottom:1px solid #e8e8e8"></div>
<div class="t" style="left:594px;top:857px;font-size:12.4px;transform:scaleX(0.837);transform-origin:0 0">1180</div>
<div class="ab" style="left:661px;top:854px;width:70px;height:19px;border-right:1px solid #e8e8e8;border-bottom:1px solid #e8e8e8"></div>
<div class="t" style="left:668px;top:857px;font-size:12.4px;transform:scaleX(0.837);transform-origin:0 0">0</div>
<div class="ab" style="left:731px;top:854px;width:61px;height:19px;border-right:1px solid #e8e8e8;border-bottom:1px solid #e8e8e8"></div>
<div class="t" style="left:738px;top:857px;font-size:12.4px;transform:scaleX(0.837);transform-origin:0 0">0</div>
<div class="ab" style="left:792px;top:854px;width:165px;height:19px;border-right:1px solid #e8e8e8;border-bottom:1px solid #e8e8e8"></div>
<div class="t" style="left:799px;top:857px;font-size:12.4px;transform:scaleX(0.837);transform-origin:0 0">SharePoint Search - Txt File</div>
<div class="ab" style="left:957px;top:854px;width:100px;height:19px;border-right:1px solid #e8e8e8;border-bottom:1px solid #e8e8e8"></div>
<div class="t" style="left:964px;top:857px;font-size:12.4px;transform:scaleX(0.837);transform-origin:0 0">1092555091</div>
<div class="ab" style="left:1057px;top:854px;width:56px;height:19px;border-right:1px solid #e8e8e8;border-bottom:1px solid #e8e8e8"></div>
<div class="t" style="left:1064px;top:857px;font-size:12.4px;transform:scaleX(0.837);transform-origin:0 0">1029</div>
<div class="ab" style="left:1113px;top:854px;width:68px;height:19px;border-right:1px solid #e8e8e8;border-bottom:1px solid #e8e8e8"></div>
<div class="t" style="left:1120px;top:857px;font-size:12.4px;transform:scaleX(0.837);transform-origin:0 0">1150</div>
<div class="ab" style="left:1181px;top:854px;width:40px;height:19px;border-right:1px solid #e8e8e8;border-bottom:1px solid #e8e8e8"></div>
<div class="t" style="left:1188px;top:857px;font-size:12.4px;transform:scaleX(0.837);transform-origin:0 0">1033</div>
<div class="ab" style="left:1221px;top:854px;width:91px;height:19px;border-right:1px solid #e8e8e8;border-bottom:1px solid #e8e8e8"></div>
<div class="t" style="left:1228px;top:857px;font-size:12.4px;transform:scaleX(0.837);transform-origin:0 0">0</div>
<div class="ab" style="left:731px;top:835px;width:61px;height:19px;background:#e8ebf0;border:1px dotted #000"></div>
<div class="t" style="left:738px;top:838px;font-size:12.4px;transform:scaleX(0.837);transform-origin:0 0">0</div>
<div class="ab" style="left:1684px;top:550px;width:17px;height:341px;background:#fff;border-left:1px solid #c8c8c8"></div>
<div class="ab" style="left:1685px;top:550px;width:16px;height:17px;background:#fff;border-bottom:1px solid #c8c8c8;border-top:1px solid #c8c8c8"></div>
<svg class="ab" style="left:1687px;top:555px" width="12" height="8" viewBox="0 0 12 8"><path d="M2 6L6 2L10 6" stroke="#707070" stroke-width="1.3" fill="none"/></svg>
<div class="ab" style="left:1685px;top:829px;width:16px;height:45px;background:#dcdcdc;border:1px solid #b8b8b8"></div>
<div class="ab" style="left:1689px;top:849px;width:7px;height:1px;background:#555;box-shadow:0 2px #555,0 4px #555"></div>
<div class="ab" style="left:1685px;top:875px;width:16px;height:16px;background:#fff;border-top:1px solid #c8c8c8"></div>
<svg class="ab" style="left:1687px;top:879px" width="12" height="8" viewBox="0 0 12 8"><path d="M2 2L6 6L10 2" stroke="#707070" stroke-width="1.3" fill="none"/></svg>
<div class="ab" style="left:509px;top:797px;width:806px;height:87px;border:5px solid #000"></div>
<div class="ab" style="left:496px;top:896px;width:1210px;height:23px;background:#f0e68c;border-top:1px solid #a9a9a9"></div>
<div class="ab" style="left:496px;top:918px;width:1210px;height:4px;background:#d5dce8"></div>
<svg class="ab" style="left:499px;top:900px" width="16" height="16" viewBox="0 0 16 16"><defs><radialGradient id="gck" cx="40%" cy="30%" r="70%"><stop offset="0" stop-color="#7ad87a"/><stop offset="1" stop-color="#1a7a2a"/></radialGradient></defs><circle cx="8" cy="8" r="7.5" fill="url(#gck)"/><path d="M4 8.5L7 11L12 5" stroke="#fff" stroke-width="2" fill="none"/></svg>
<div class="t su" style="left:519px;top:902px">Query executed successfully.</div>
<div class="ab" style="left:1206px;top:900px;width:1px;height:16px;background:#a8a488"></div>
<div class="ab" style="left:1207px;top:900px;width:1px;height:16px;background:#fbf6c8"></div>
<div class="t su" style="left:1213px;top:902px;letter-spacing:-0.1px">WIN-2J3IDCDEUH6\DEFAULTDB (...</div>
<div class="ab" style="left:1406px;top:900px;width:1px;height:16px;background:#a8a488"></div>
<div class="ab" style="left:1407px;top:900px;width:1px;height:16px;background:#fbf6c8"></div>
<div class="t su" style="left:1411px;top:902px;letter-spacing:0px">SP\Administrator (74)</div>
<div class="ab" style="left:1533px;top:900px;width:1px;height:16px;background:#a8a488"></div>
<div class="ab" style="left:1534px;top:900px;width:1px;height:16px;background:#fbf6c8"></div>
<div class="t su" style="left:1538px;top:902px;letter-spacing:0px">master</div>
<div class="ab" style="left:1582px;top:900px;width:1px;height:16px;background:#a8a488"></div>
<div class="ab" style="left:1583px;top:900px;width:1px;height:16px;background:#fbf6c8"></div>
<div class="t su" style="left:1587px;top:902px;letter-spacing:-0.45px">00:00:00</div>
<div class="ab" style="left:1637px;top:900px;width:1px;height:16px;background:#a8a488"></div>
<div class="ab" style="left:1638px;top:900px;width:1px;height:16px;background:#fbf6c8"></div>
<div class="t su" style="left:1643px;top:902px;letter-spacing:-0.2px">109 rows</div>
<div class="t su" style="left:4px;top:935px;color:#fff;letter-spacing:-0.2px">Ready</div>
</body></html>
